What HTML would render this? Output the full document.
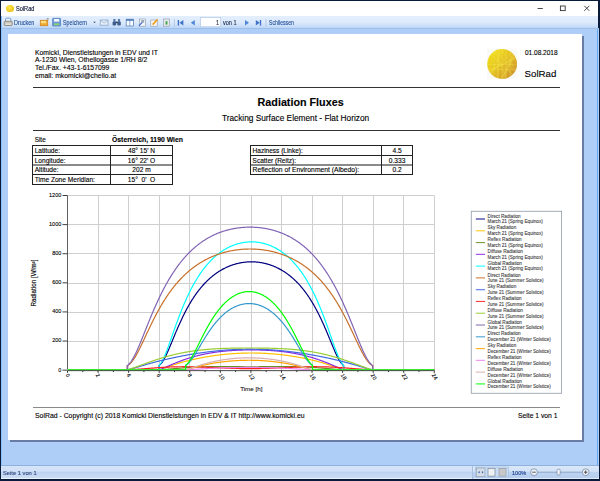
<!DOCTYPE html>
<html><head><meta charset="utf-8">
<style>
html,body{margin:0;padding:0;width:600px;height:481px;overflow:hidden;background:#fff;}
body{position:relative;font-family:"Liberation Sans",sans-serif;}
.a{position:absolute;}
.t{position:absolute;white-space:nowrap;-webkit-text-stroke:0.12px currentColor;}
</style></head><body>
<!-- window frame -->
<div class="a" style="left:0;top:0;width:600px;height:481px;background:#0a1a3a"></div>
<div class="a" style="left:1px;top:1px;width:596.6px;height:15px;background:#fff"></div>
<!-- toolbar -->
<div class="a" style="left:1px;top:16px;width:596.6px;height:11.5px;background:linear-gradient(#e4effd,#dceafc 55%,#c8def9 85%,#bcd6f6)"></div>
<div class="a" style="left:1px;top:27.5px;width:597.5px;height:1.5px;background:#9ebfea"></div>
<!-- main area -->
<div class="a" style="left:1px;top:29px;width:597.5px;height:436px;background:#aecdf7"></div>
<div class="a" style="left:1px;top:16px;width:1px;height:463px;background:#8cc0ff"></div>
<div class="a" style="left:597.3px;top:29px;width:1.2px;height:450px;background:#6aa8f0"></div>
<!-- status bar -->
<div class="a" style="left:1px;top:465px;width:597.5px;height:1px;background:#8eb1de"></div>
<div class="a" style="left:1px;top:466px;width:597.5px;height:12.5px;background:linear-gradient(#d6e5f8,#d0e0f7 40%,#b8d1f0 52%,#c4d8f3 62%,#c8dbf4 88%,#eef5ff 97%)"></div>
<!-- page shadow + page -->
<div class="a" style="left:10px;top:36px;width:574px;height:405.6px;background:#687ca4;filter:blur(0.3px)"></div>
<div class="a" style="left:8px;top:34px;width:574.1px;height:406px;background:#fff"></div>

<!-- PAGE CONTENT -->
<div class="t" style="left:35px;top:49.70px;font-size:6.85px;line-height:6.85px;color:#000">Komicki, Dienstleistungen in EDV und IT</div>
<div class="t" style="left:35px;top:57.40px;font-size:6.85px;line-height:6.85px;color:#000">A-1230 Wien, Othellogasse 1/RH 8/2</div>
<div class="t" style="left:35px;top:65.10px;font-size:6.85px;line-height:6.85px;color:#000">Tel./Fax. +43-1-6157099</div>
<div class="t" style="left:35px;top:73.10px;font-size:6.85px;line-height:6.85px;color:#000">email: mkomicki@chello.at</div>

<div class="a" style="left:33px;top:86.7px;width:527px;height:1px;background:#333"></div>
<div class="t" style="left:525px;top:50.0px;font-size:6.53px;line-height:6.53px;color:#000">01.08.2018</div>
<div class="t" style="left:524.6px;top:68.8px;font-size:9.7px;line-height:9.7px;color:#000">SolRad</div>
<svg width="600" height="100" style="position:absolute;left:0;top:0">
<defs><linearGradient id="sg" x1="0" y1="0" x2="1" y2="1"><stop offset="0" stop-color="#f4e618"/><stop offset="0.4" stop-color="#e8c824"/><stop offset="1" stop-color="#c8862e"/></linearGradient>
<clipPath id="sc"><circle cx="502.15" cy="64.00" r="14.90"/></clipPath></defs>
<rect x="487" y="48.6" width="30.4" height="30.4" fill="#f9f9f7"/>
<circle cx="502.15" cy="64.00" r="14.90" fill="url(#sg)"/>
<g clip-path="url(#sc)" stroke="#f6ea50" stroke-width="0.45" opacity="0.75"><line x1="487.0" y1="50.9" x2="516.3" y2="78.1"/><line x1="492.7" y1="46.3" x2="508.6" y2="83.0"/><line x1="516.3" y1="48.2" x2="500.9" y2="85.1"/><line x1="481.9" y1="68.6" x2="521.9" y2="70.2"/><line x1="491.5" y1="46.5" x2="519.0" y2="75.6"/><line x1="522.2" y1="64.2" x2="482.2" y2="64.7"/><line x1="519.8" y1="54.5" x2="484.9" y2="74.2"/><line x1="515.7" y1="48.2" x2="498.8" y2="84.5"/><line x1="505.0" y1="43.3" x2="488.6" y2="79.8"/><line x1="499.8" y1="43.8" x2="496.8" y2="83.7"/><line x1="518.4" y1="50.4" x2="497.9" y2="84.7"/><line x1="515.6" y1="49.2" x2="486.6" y2="76.7"/><line x1="496.5" y1="43.4" x2="519.9" y2="75.8"/><line x1="520.6" y1="56.2" x2="484.1" y2="72.6"/><line x1="494.1" y1="48.0" x2="494.1" y2="80.0"/><line x1="498.1" y1="48.0" x2="498.1" y2="80.0"/><line x1="502.1" y1="48.0" x2="502.1" y2="80.0"/><line x1="506.1" y1="48.0" x2="506.1" y2="80.0"/><line x1="510.1" y1="48.0" x2="510.1" y2="80.0"/></g>
</svg>

<div class="t" style="left:257.6px;top:96.5px;font-size:10.75px;line-height:10.75px;font-weight:bold;color:#000">Radiation Fluxes</div>
<div class="t" style="left:221.9px;top:113.5px;font-size:8.3px;line-height:8.3px;color:#000">Tracking Surface Element - Flat Horizon</div>
<div class="a" style="left:33px;top:130px;width:527px;height:1px;background:#333"></div>

<!-- site table -->
<div class="t" style="left:34.7px;top:137.3px;font-size:6.4px;line-height:6.4px;color:#000">Site</div>
<div class="t" style="left:112px;top:137.3px;font-size:6.84px;line-height:6.84px;font-weight:bold;color:#000">Österreich, 1190 Wien</div>
<div class="a" style="left:32.30px;top:145.00px;width:140.70px;height:1.00px;background:#222"></div>
<div class="a" style="left:32.30px;top:154.85px;width:140.70px;height:1.00px;background:#222"></div>
<div class="a" style="left:32.30px;top:164.20px;width:140.70px;height:1.60px;background:#8a8a8a"></div>
<div class="a" style="left:32.30px;top:174.20px;width:140.70px;height:1.00px;background:#222"></div>
<div class="a" style="left:32.30px;top:183.65px;width:140.70px;height:1.00px;background:#222"></div>
<div class="a" style="left:31.80px;top:145.00px;width:1.00px;height:39.65px;background:#222"></div>
<div class="a" style="left:110.00px;top:145.00px;width:1.00px;height:39.65px;background:#222"></div>
<div class="a" style="left:172.00px;top:145.00px;width:1.00px;height:39.65px;background:#222"></div>
<div class="t" style="top:147.81px;font-size:6.60px;line-height:6.60px;color:#000;left:34.70px;">Latitude:</div>
<div class="t" style="top:147.81px;font-size:6.60px;line-height:6.60px;color:#000;left:141.50px;width:0;display:flex;justify-content:center;">48° 15' N</div>
<div class="t" style="top:157.66px;font-size:6.60px;line-height:6.60px;color:#000;left:34.70px;">Longitude:</div>
<div class="t" style="top:157.66px;font-size:6.60px;line-height:6.60px;color:#000;left:141.50px;width:0;display:flex;justify-content:center;">16° 22' O</div>
<div class="t" style="top:167.31px;font-size:6.60px;line-height:6.60px;color:#000;left:34.70px;">Altitude:</div>
<div class="t" style="top:167.31px;font-size:6.60px;line-height:6.60px;color:#000;left:141.50px;width:0;display:flex;justify-content:center;">202 m</div>
<div class="t" style="top:177.01px;font-size:6.60px;line-height:6.60px;color:#000;left:34.70px;">Time Zone Meridian:</div>
<div class="t" style="top:177.01px;font-size:6.60px;line-height:6.60px;color:#000;left:141.50px;width:0;display:flex;justify-content:center;">15°&nbsp;&nbsp;0'&nbsp;&nbsp;O</div>
<div class="a" style="left:250.40px;top:145.10px;width:162.70px;height:1.00px;background:#222"></div>
<div class="a" style="left:250.40px;top:154.90px;width:162.70px;height:1.00px;background:#222"></div>
<div class="a" style="left:250.40px;top:164.20px;width:162.70px;height:1.60px;background:#8a8a8a"></div>
<div class="a" style="left:250.40px;top:174.00px;width:162.70px;height:1.00px;background:#222"></div>
<div class="a" style="left:249.90px;top:145.10px;width:1.00px;height:29.90px;background:#222"></div>
<div class="a" style="left:381.10px;top:145.10px;width:1.00px;height:29.90px;background:#222"></div>
<div class="a" style="left:412.10px;top:145.10px;width:1.00px;height:29.90px;background:#222"></div>
<div class="t" style="top:148.00px;font-size:6.50px;line-height:6.50px;color:#000;left:252.60px;">Haziness (Linke):</div>
<div class="t" style="top:147.91px;font-size:6.60px;line-height:6.60px;color:#000;left:397.10px;width:0;display:flex;justify-content:center;">4.5</div>
<div class="t" style="top:157.80px;font-size:6.50px;line-height:6.50px;color:#000;left:252.60px;">Scatter (Reitz):</div>
<div class="t" style="top:157.71px;font-size:6.60px;line-height:6.60px;color:#000;left:397.10px;width:0;display:flex;justify-content:center;">0.333</div>
<div class="t" style="top:167.19px;font-size:6.75px;line-height:6.75px;color:#000;left:252.60px;">Reflection of Environment (Albedo):</div>
<div class="t" style="top:167.31px;font-size:6.60px;line-height:6.60px;color:#000;left:397.10px;width:0;display:flex;justify-content:center;">0.2</div>

<svg style="position:absolute;left:0;top:0" width="600" height="481"><line x1="67.50" y1="195.5" x2="67.50" y2="370.15" stroke="#cfcfcf" stroke-width="1"/><line x1="98.50" y1="195.5" x2="98.50" y2="370.15" stroke="#cfcfcf" stroke-width="1"/><line x1="128.50" y1="195.5" x2="128.50" y2="370.15" stroke="#cfcfcf" stroke-width="1"/><line x1="159.50" y1="195.5" x2="159.50" y2="370.15" stroke="#cfcfcf" stroke-width="1"/><line x1="189.50" y1="195.5" x2="189.50" y2="370.15" stroke="#cfcfcf" stroke-width="1"/><line x1="220.50" y1="195.5" x2="220.50" y2="370.15" stroke="#cfcfcf" stroke-width="1"/><line x1="251.50" y1="195.5" x2="251.50" y2="370.15" stroke="#cfcfcf" stroke-width="1"/><line x1="281.50" y1="195.5" x2="281.50" y2="370.15" stroke="#cfcfcf" stroke-width="1"/><line x1="312.50" y1="195.5" x2="312.50" y2="370.15" stroke="#cfcfcf" stroke-width="1"/><line x1="342.50" y1="195.5" x2="342.50" y2="370.15" stroke="#cfcfcf" stroke-width="1"/><line x1="373.50" y1="195.5" x2="373.50" y2="370.15" stroke="#cfcfcf" stroke-width="1"/><line x1="403.50" y1="195.5" x2="403.50" y2="370.15" stroke="#cfcfcf" stroke-width="1"/><line x1="434.50" y1="195.5" x2="434.50" y2="370.15" stroke="#cfcfcf" stroke-width="1"/><line x1="67.5" y1="370.50" x2="434.3" y2="370.50" stroke="#cfcfcf" stroke-width="1"/><line x1="67.5" y1="341.50" x2="434.3" y2="341.50" stroke="#cfcfcf" stroke-width="1"/><line x1="67.5" y1="312.50" x2="434.3" y2="312.50" stroke="#cfcfcf" stroke-width="1"/><line x1="67.5" y1="283.50" x2="434.3" y2="283.50" stroke="#cfcfcf" stroke-width="1"/><line x1="67.5" y1="253.50" x2="434.3" y2="253.50" stroke="#cfcfcf" stroke-width="1"/><line x1="67.5" y1="224.50" x2="434.3" y2="224.50" stroke="#cfcfcf" stroke-width="1"/><line x1="67.5" y1="195.50" x2="434.3" y2="195.50" stroke="#cfcfcf" stroke-width="1"/><line x1="67.5" y1="195.5" x2="67.5" y2="371" stroke="#606060" stroke-width="1"/><line x1="62.5" y1="370.15" x2="67.5" y2="370.15" stroke="#404040" stroke-width="1"/><line x1="62.5" y1="341.04" x2="67.5" y2="341.04" stroke="#404040" stroke-width="1"/><line x1="62.5" y1="311.93" x2="67.5" y2="311.93" stroke="#404040" stroke-width="1"/><line x1="62.5" y1="282.83" x2="67.5" y2="282.83" stroke="#404040" stroke-width="1"/><line x1="62.5" y1="253.72" x2="67.5" y2="253.72" stroke="#404040" stroke-width="1"/><line x1="62.5" y1="224.61" x2="67.5" y2="224.61" stroke="#404040" stroke-width="1"/><line x1="62.5" y1="195.50" x2="67.5" y2="195.50" stroke="#404040" stroke-width="1"/><line x1="67.50" y1="370.3" x2="67.50" y2="372.80" stroke="#303030" stroke-width="1"/><line x1="82.78" y1="370.3" x2="82.78" y2="372.10" stroke="#303030" stroke-width="1"/><line x1="98.07" y1="370.3" x2="98.07" y2="372.80" stroke="#303030" stroke-width="1"/><line x1="113.35" y1="370.3" x2="113.35" y2="372.10" stroke="#303030" stroke-width="1"/><line x1="128.63" y1="370.3" x2="128.63" y2="372.80" stroke="#303030" stroke-width="1"/><line x1="143.91" y1="370.3" x2="143.91" y2="372.10" stroke="#303030" stroke-width="1"/><line x1="159.20" y1="370.3" x2="159.20" y2="372.80" stroke="#303030" stroke-width="1"/><line x1="174.48" y1="370.3" x2="174.48" y2="372.10" stroke="#303030" stroke-width="1"/><line x1="189.76" y1="370.3" x2="189.76" y2="372.80" stroke="#303030" stroke-width="1"/><line x1="205.05" y1="370.3" x2="205.05" y2="372.10" stroke="#303030" stroke-width="1"/><line x1="220.33" y1="370.3" x2="220.33" y2="372.80" stroke="#303030" stroke-width="1"/><line x1="235.61" y1="370.3" x2="235.61" y2="372.10" stroke="#303030" stroke-width="1"/><line x1="250.90" y1="370.3" x2="250.90" y2="372.80" stroke="#303030" stroke-width="1"/><line x1="266.18" y1="370.3" x2="266.18" y2="372.10" stroke="#303030" stroke-width="1"/><line x1="281.46" y1="370.3" x2="281.46" y2="372.80" stroke="#303030" stroke-width="1"/><line x1="296.75" y1="370.3" x2="296.75" y2="372.10" stroke="#303030" stroke-width="1"/><line x1="312.03" y1="370.3" x2="312.03" y2="372.80" stroke="#303030" stroke-width="1"/><line x1="327.31" y1="370.3" x2="327.31" y2="372.10" stroke="#303030" stroke-width="1"/><line x1="342.59" y1="370.3" x2="342.59" y2="372.80" stroke="#303030" stroke-width="1"/><line x1="357.88" y1="370.3" x2="357.88" y2="372.10" stroke="#303030" stroke-width="1"/><line x1="373.16" y1="370.3" x2="373.16" y2="372.80" stroke="#303030" stroke-width="1"/><line x1="388.44" y1="370.3" x2="388.44" y2="372.10" stroke="#303030" stroke-width="1"/><line x1="403.73" y1="370.3" x2="403.73" y2="372.80" stroke="#303030" stroke-width="1"/><line x1="419.01" y1="370.3" x2="419.01" y2="372.10" stroke="#303030" stroke-width="1"/><line x1="434.29" y1="370.3" x2="434.29" y2="372.80" stroke="#303030" stroke-width="1"/><path d="M67.50 369.85 L158.89 369.85 L159.05 369.85 L159.05 365.44 L159.20 365.34 L159.66 365.01 L160.11 364.62 L160.57 364.18 L161.03 363.69 L161.49 363.15 L161.95 362.56 L162.41 361.92 L162.87 361.24 L163.32 360.51 L163.78 359.73 L164.24 358.92 L164.70 358.07 L165.16 357.19 L165.62 356.28 L166.08 355.33 L166.53 354.36 L166.99 353.37 L167.45 352.35 L167.91 351.32 L168.37 350.27 L168.83 349.20 L169.28 348.13 L169.74 347.04 L170.20 345.94 L170.66 344.84 L171.12 343.73 L171.58 342.62 L172.04 341.50 L172.49 340.39 L172.95 339.27 L173.41 338.16 L173.87 337.05 L174.33 335.94 L174.79 334.83 L175.25 333.73 L175.70 332.64 L176.16 331.55 L176.62 330.47 L177.08 329.40 L177.54 328.33 L178.00 327.28 L178.45 326.23 L178.91 325.19 L179.37 324.16 L179.83 323.14 L180.29 322.13 L180.75 321.14 L181.21 320.15 L181.66 319.17 L182.12 318.20 L182.58 317.25 L183.04 316.30 L183.50 315.37 L183.96 314.44 L184.41 313.53 L184.87 312.63 L185.33 311.74 L185.79 310.86 L186.25 309.99 L186.71 309.13 L187.17 308.29 L187.62 307.45 L188.08 306.63 L188.54 305.81 L189.00 305.01 L189.46 304.22 L189.92 303.44 L190.38 302.67 L190.83 301.91 L191.29 301.16 L191.75 300.42 L192.21 299.69 L192.67 298.97 L193.13 298.26 L193.58 297.56 L194.04 296.87 L194.50 296.19 L194.96 295.52 L195.42 294.86 L195.88 294.21 L196.34 293.57 L196.79 292.94 L197.25 292.31 L197.71 291.70 L198.17 291.09 L198.63 290.50 L199.09 289.91 L199.55 289.33 L200.00 288.76 L200.46 288.20 L200.92 287.64 L201.38 287.10 L201.84 286.56 L202.30 286.03 L202.75 285.51 L203.21 284.99 L203.67 284.49 L204.13 283.99 L204.59 283.50 L205.05 283.01 L205.51 282.53 L205.96 282.07 L206.42 281.60 L206.88 281.15 L207.34 280.70 L207.80 280.26 L208.26 279.83 L208.71 279.40 L209.17 278.98 L209.63 278.56 L210.09 278.16 L210.55 277.76 L211.01 277.36 L211.47 276.97 L211.92 276.59 L212.38 276.21 L212.84 275.84 L213.30 275.48 L213.76 275.12 L214.22 274.77 L214.68 274.43 L215.13 274.09 L215.59 273.75 L216.05 273.42 L216.51 273.10 L216.97 272.78 L217.43 272.47 L217.88 272.16 L218.34 271.86 L218.80 271.56 L219.26 271.27 L219.72 270.99 L220.18 270.71 L220.64 270.43 L221.09 270.16 L221.55 269.90 L222.01 269.64 L222.47 269.38 L222.93 269.13 L223.39 268.89 L223.85 268.64 L224.30 268.41 L224.76 268.18 L225.22 267.95 L225.68 267.73 L226.14 267.51 L226.60 267.30 L227.05 267.09 L227.51 266.89 L227.97 266.69 L228.43 266.49 L228.89 266.30 L229.35 266.11 L229.81 265.93 L230.26 265.75 L230.72 265.58 L231.18 265.41 L231.64 265.25 L232.10 265.08 L232.56 264.93 L233.01 264.78 L233.47 264.63 L233.93 264.48 L234.39 264.34 L234.85 264.21 L235.31 264.07 L235.77 263.94 L236.22 263.82 L236.68 263.70 L237.14 263.58 L237.60 263.47 L238.06 263.36 L238.52 263.26 L238.98 263.15 L239.43 263.06 L239.89 262.96 L240.35 262.87 L240.81 262.79 L241.27 262.70 L241.73 262.63 L242.18 262.55 L242.64 262.48 L243.10 262.41 L243.56 262.35 L244.02 262.29 L244.48 262.23 L244.94 262.18 L245.39 262.13 L245.85 262.08 L246.31 262.04 L246.77 262.00 L247.23 261.97 L247.69 261.94 L248.15 261.91 L248.60 261.89 L249.06 261.87 L249.52 261.85 L249.98 261.84 L250.44 261.83 L250.90 261.82 L251.35 261.82 L251.81 261.82 L252.27 261.83 L252.73 261.84 L253.19 261.85 L253.65 261.87 L254.11 261.89 L254.56 261.91 L255.02 261.94 L255.48 261.97 L255.94 262.00 L256.40 262.04 L256.86 262.08 L257.31 262.12 L257.77 262.17 L258.23 262.22 L258.69 262.28 L259.15 262.34 L259.61 262.40 L260.07 262.47 L260.52 262.54 L260.98 262.62 L261.44 262.69 L261.90 262.78 L262.36 262.86 L262.82 262.95 L263.28 263.04 L263.73 263.14 L264.19 263.24 L264.65 263.35 L265.11 263.45 L265.57 263.57 L266.03 263.68 L266.48 263.80 L266.94 263.93 L267.40 264.06 L267.86 264.19 L268.32 264.32 L268.78 264.46 L269.24 264.61 L269.69 264.76 L270.15 264.91 L270.61 265.06 L271.07 265.22 L271.53 265.39 L271.99 265.56 L272.45 265.73 L272.90 265.91 L273.36 266.09 L273.82 266.27 L274.28 266.47 L274.74 266.66 L275.20 266.86 L275.65 267.06 L276.11 267.27 L276.57 267.48 L277.03 267.70 L277.49 267.92 L277.95 268.15 L278.41 268.38 L278.86 268.61 L279.32 268.85 L279.78 269.10 L280.24 269.35 L280.70 269.60 L281.16 269.86 L281.61 270.13 L282.07 270.40 L282.53 270.67 L282.99 270.95 L283.45 271.24 L283.91 271.53 L284.37 271.82 L284.82 272.12 L285.28 272.43 L285.74 272.74 L286.20 273.06 L286.66 273.38 L287.12 273.71 L287.58 274.04 L288.03 274.38 L288.49 274.72 L288.95 275.08 L289.41 275.43 L289.87 275.80 L290.33 276.16 L290.78 276.54 L291.24 276.92 L291.70 277.31 L292.16 277.70 L292.62 278.10 L293.08 278.51 L293.54 278.92 L293.99 279.34 L294.45 279.77 L294.91 280.20 L295.37 280.64 L295.83 281.09 L296.29 281.54 L296.75 282.00 L297.20 282.47 L297.66 282.95 L298.12 283.43 L298.58 283.92 L299.04 284.42 L299.50 284.92 L299.95 285.44 L300.41 285.96 L300.87 286.49 L301.33 287.02 L301.79 287.57 L302.25 288.12 L302.71 288.68 L303.16 289.25 L303.62 289.83 L304.08 290.42 L304.54 291.01 L305.00 291.62 L305.46 292.23 L305.91 292.85 L306.37 293.48 L306.83 294.12 L307.29 294.77 L307.75 295.43 L308.21 296.10 L308.67 296.78 L309.12 297.47 L309.58 298.17 L310.04 298.87 L310.50 299.59 L310.96 300.32 L311.42 301.06 L311.88 301.81 L312.33 302.57 L312.79 303.34 L313.25 304.11 L313.71 304.91 L314.17 305.71 L314.63 306.52 L315.08 307.34 L315.54 308.18 L316.00 309.02 L316.46 309.88 L316.92 310.74 L317.38 311.62 L317.84 312.51 L318.29 313.41 L318.75 314.32 L319.21 315.24 L319.67 316.17 L320.13 317.12 L320.59 318.07 L321.04 319.04 L321.50 320.02 L321.96 321.00 L322.42 322.00 L322.88 323.01 L323.34 324.03 L323.80 325.05 L324.25 326.09 L324.71 327.14 L325.17 328.19 L325.63 329.26 L326.09 330.33 L326.55 331.41 L327.01 332.49 L327.46 333.59 L327.92 334.69 L328.38 335.79 L328.84 336.90 L329.30 338.01 L329.76 339.12 L330.21 340.24 L330.67 341.35 L331.13 342.47 L331.59 343.58 L332.05 344.69 L332.51 345.80 L332.97 346.89 L333.42 347.98 L333.88 349.06 L334.34 350.13 L334.80 351.18 L335.26 352.22 L335.72 353.23 L336.18 354.23 L336.63 355.20 L337.09 356.15 L337.55 357.07 L338.01 357.96 L338.47 358.81 L338.93 359.63 L339.38 360.40 L339.84 361.14 L340.30 361.83 L340.76 362.48 L341.22 363.08 L341.68 363.63 L342.14 364.12 L342.59 364.57 L343.05 364.96 L343.51 365.30 L343.66 365.40 L343.66 369.85 L343.82 369.85 L434.29 369.85" fill="none" stroke="#000080" stroke-width="1.2" stroke-linejoin="round"/><path d="M67.50 369.85 L158.89 369.85 L159.05 369.85 L159.05 369.83 L159.20 369.79 L159.66 369.67 L160.11 369.54 L160.57 369.40 L161.03 369.26 L161.49 369.11 L161.95 368.96 L162.41 368.80 L162.87 368.64 L163.32 368.48 L163.78 368.32 L164.24 368.16 L164.70 367.99 L165.16 367.83 L165.62 367.67 L166.08 367.50 L166.53 367.34 L166.99 367.17 L167.45 367.01 L167.91 366.85 L168.37 366.68 L168.83 366.52 L169.28 366.36 L169.74 366.20 L170.20 366.04 L170.66 365.88 L171.12 365.72 L171.58 365.57 L172.04 365.41 L172.49 365.26 L172.95 365.10 L173.41 364.95 L173.87 364.80 L174.33 364.65 L174.79 364.50 L175.25 364.36 L175.70 364.21 L176.16 364.06 L176.62 363.92 L177.08 363.78 L177.54 363.64 L178.00 363.50 L178.45 363.36 L178.91 363.22 L179.37 363.08 L179.83 362.95 L180.29 362.81 L180.75 362.68 L181.21 362.55 L181.66 362.42 L182.12 362.29 L182.58 362.16 L183.04 362.03 L183.50 361.91 L183.96 361.78 L184.41 361.66 L184.87 361.54 L185.33 361.41 L185.79 361.29 L186.25 361.17 L186.71 361.06 L187.17 360.94 L187.62 360.82 L188.08 360.71 L188.54 360.59 L189.00 360.48 L189.46 360.37 L189.92 360.25 L190.38 360.14 L190.83 360.03 L191.29 359.93 L191.75 359.82 L192.21 359.71 L192.67 359.61 L193.13 359.50 L193.58 359.40 L194.04 359.30 L194.50 359.19 L194.96 359.09 L195.42 358.99 L195.88 358.89 L196.34 358.80 L196.79 358.70 L197.25 358.60 L197.71 358.51 L198.17 358.41 L198.63 358.32 L199.09 358.23 L199.55 358.13 L200.00 358.04 L200.46 357.95 L200.92 357.86 L201.38 357.78 L201.84 357.69 L202.30 357.60 L202.75 357.52 L203.21 357.43 L203.67 357.35 L204.13 357.26 L204.59 357.18 L205.05 357.10 L205.51 357.02 L205.96 356.94 L206.42 356.86 L206.88 356.78 L207.34 356.70 L207.80 356.63 L208.26 356.55 L208.71 356.48 L209.17 356.40 L209.63 356.33 L210.09 356.26 L210.55 356.19 L211.01 356.11 L211.47 356.04 L211.92 355.97 L212.38 355.91 L212.84 355.84 L213.30 355.77 L213.76 355.71 L214.22 355.64 L214.68 355.58 L215.13 355.51 L215.59 355.45 L216.05 355.39 L216.51 355.33 L216.97 355.27 L217.43 355.21 L217.88 355.15 L218.34 355.09 L218.80 355.03 L219.26 354.98 L219.72 354.92 L220.18 354.87 L220.64 354.81 L221.09 354.76 L221.55 354.71 L222.01 354.65 L222.47 354.60 L222.93 354.55 L223.39 354.50 L223.85 354.46 L224.30 354.41 L224.76 354.36 L225.22 354.32 L225.68 354.27 L226.14 354.23 L226.60 354.18 L227.05 354.14 L227.51 354.10 L227.97 354.06 L228.43 354.02 L228.89 353.98 L229.35 353.94 L229.81 353.90 L230.26 353.86 L230.72 353.82 L231.18 353.79 L231.64 353.75 L232.10 353.72 L232.56 353.69 L233.01 353.65 L233.47 353.62 L233.93 353.59 L234.39 353.56 L234.85 353.53 L235.31 353.50 L235.77 353.48 L236.22 353.45 L236.68 353.42 L237.14 353.40 L237.60 353.37 L238.06 353.35 L238.52 353.33 L238.98 353.30 L239.43 353.28 L239.89 353.26 L240.35 353.24 L240.81 353.22 L241.27 353.21 L241.73 353.19 L242.18 353.17 L242.64 353.16 L243.10 353.14 L243.56 353.13 L244.02 353.11 L244.48 353.10 L244.94 353.09 L245.39 353.08 L245.85 353.07 L246.31 353.06 L246.77 353.05 L247.23 353.04 L247.69 353.04 L248.15 353.03 L248.60 353.02 L249.06 353.02 L249.52 353.02 L249.98 353.01 L250.44 353.01 L250.90 353.01 L251.35 353.01 L251.81 353.01 L252.27 353.01 L252.73 353.01 L253.19 353.02 L253.65 353.02 L254.11 353.02 L254.56 353.03 L255.02 353.04 L255.48 353.04 L255.94 353.05 L256.40 353.06 L256.86 353.07 L257.31 353.08 L257.77 353.09 L258.23 353.10 L258.69 353.11 L259.15 353.13 L259.61 353.14 L260.07 353.15 L260.52 353.17 L260.98 353.19 L261.44 353.20 L261.90 353.22 L262.36 353.24 L262.82 353.26 L263.28 353.28 L263.73 353.30 L264.19 353.32 L264.65 353.35 L265.11 353.37 L265.57 353.39 L266.03 353.42 L266.48 353.45 L266.94 353.47 L267.40 353.50 L267.86 353.53 L268.32 353.56 L268.78 353.59 L269.24 353.62 L269.69 353.65 L270.15 353.68 L270.61 353.72 L271.07 353.75 L271.53 353.78 L271.99 353.82 L272.45 353.86 L272.90 353.89 L273.36 353.93 L273.82 353.97 L274.28 354.01 L274.74 354.05 L275.20 354.09 L275.65 354.13 L276.11 354.18 L276.57 354.22 L277.03 354.26 L277.49 354.31 L277.95 354.36 L278.41 354.40 L278.86 354.45 L279.32 354.50 L279.78 354.55 L280.24 354.60 L280.70 354.65 L281.16 354.70 L281.61 354.75 L282.07 354.80 L282.53 354.86 L282.99 354.91 L283.45 354.97 L283.91 355.03 L284.37 355.08 L284.82 355.14 L285.28 355.20 L285.74 355.26 L286.20 355.32 L286.66 355.38 L287.12 355.44 L287.58 355.50 L288.03 355.57 L288.49 355.63 L288.95 355.70 L289.41 355.76 L289.87 355.83 L290.33 355.90 L290.78 355.97 L291.24 356.03 L291.70 356.10 L292.16 356.18 L292.62 356.25 L293.08 356.32 L293.54 356.39 L293.99 356.47 L294.45 356.54 L294.91 356.62 L295.37 356.69 L295.83 356.77 L296.29 356.85 L296.75 356.93 L297.20 357.01 L297.66 357.09 L298.12 357.17 L298.58 357.25 L299.04 357.34 L299.50 357.42 L299.95 357.50 L300.41 357.59 L300.87 357.68 L301.33 357.76 L301.79 357.85 L302.25 357.94 L302.71 358.03 L303.16 358.12 L303.62 358.21 L304.08 358.31 L304.54 358.40 L305.00 358.49 L305.46 358.59 L305.91 358.69 L306.37 358.78 L306.83 358.88 L307.29 358.98 L307.75 359.08 L308.21 359.18 L308.67 359.28 L309.12 359.38 L309.58 359.49 L310.04 359.59 L310.50 359.70 L310.96 359.80 L311.42 359.91 L311.88 360.02 L312.33 360.13 L312.79 360.24 L313.25 360.35 L313.71 360.46 L314.17 360.58 L314.63 360.69 L315.08 360.81 L315.54 360.92 L316.00 361.04 L316.46 361.16 L316.92 361.28 L317.38 361.40 L317.84 361.52 L318.29 361.64 L318.75 361.77 L319.21 361.89 L319.67 362.02 L320.13 362.14 L320.59 362.27 L321.04 362.40 L321.50 362.53 L321.96 362.66 L322.42 362.80 L322.88 362.93 L323.34 363.07 L323.80 363.20 L324.25 363.34 L324.71 363.48 L325.17 363.62 L325.63 363.76 L326.09 363.90 L326.55 364.05 L327.01 364.19 L327.46 364.34 L327.92 364.48 L328.38 364.63 L328.84 364.78 L329.30 364.93 L329.76 365.08 L330.21 365.24 L330.67 365.39 L331.13 365.55 L331.59 365.70 L332.05 365.86 L332.51 366.02 L332.97 366.18 L333.42 366.34 L333.88 366.50 L334.34 366.66 L334.80 366.82 L335.26 366.99 L335.72 367.15 L336.18 367.32 L336.63 367.48 L337.09 367.64 L337.55 367.81 L338.01 367.97 L338.47 368.14 L338.93 368.30 L339.38 368.46 L339.84 368.62 L340.30 368.78 L340.76 368.93 L341.22 369.09 L341.68 369.24 L342.14 369.38 L342.59 369.52 L343.05 369.65 L343.51 369.78 L343.66 369.82 L343.66 369.85 L343.82 369.85 L434.29 369.85" fill="none" stroke="#ffc000" stroke-width="1.2" stroke-linejoin="round"/><path d="M67.50 369.85 L158.89 369.85 L159.05 369.85 L159.05 369.85 L159.20 369.84 L159.66 369.81 L160.11 369.78 L160.57 369.75 L161.03 369.72 L161.49 369.69 L161.95 369.66 L162.41 369.63 L162.87 369.60 L163.32 369.56 L163.78 369.53 L164.24 369.49 L164.70 369.46 L165.16 369.42 L165.62 369.38 L166.08 369.35 L166.53 369.31 L166.99 369.27 L167.45 369.23 L167.91 369.20 L168.37 369.16 L168.83 369.12 L169.28 369.08 L169.74 369.04 L170.20 369.00 L170.66 368.96 L171.12 368.92 L171.58 368.88 L172.04 368.84 L172.49 368.80 L172.95 368.76 L173.41 368.72 L173.87 368.68 L174.33 368.64 L174.79 368.60 L175.25 368.56 L175.70 368.52 L176.16 368.48 L176.62 368.44 L177.08 368.40 L177.54 368.36 L178.00 368.32 L178.45 368.28 L178.91 368.24 L179.37 368.20 L179.83 368.17 L180.29 368.13 L180.75 368.09 L181.21 368.05 L181.66 368.01 L182.12 367.98 L182.58 367.94 L183.04 367.90 L183.50 367.87 L183.96 367.83 L184.41 367.80 L184.87 367.76 L185.33 367.73 L185.79 367.70 L186.25 367.66 L186.71 367.63 L187.17 367.60 L187.62 367.57 L188.08 367.54 L188.54 367.50 L189.00 367.47 L189.46 367.44 L189.92 367.42 L190.38 367.39 L190.83 367.36 L191.29 367.33 L191.75 367.30 L192.21 367.28 L192.67 367.25 L193.13 367.23 L193.58 367.20 L194.04 367.18 L194.50 367.15 L194.96 367.13 L195.42 367.11 L195.88 367.08 L196.34 367.06 L196.79 367.04 L197.25 367.02 L197.71 367.00 L198.17 366.98 L198.63 366.96 L199.09 366.94 L199.55 366.93 L200.00 366.91 L200.46 366.89 L200.92 366.88 L201.38 366.86 L201.84 366.85 L202.30 366.83 L202.75 366.82 L203.21 366.80 L203.67 366.79 L204.13 366.78 L204.59 366.77 L205.05 366.75 L205.51 366.74 L205.96 366.73 L206.42 366.72 L206.88 366.71 L207.34 366.70 L207.80 366.69 L208.26 366.68 L208.71 366.68 L209.17 366.67 L209.63 366.66 L210.09 366.65 L210.55 366.65 L211.01 366.64 L211.47 366.64 L211.92 366.63 L212.38 366.63 L212.84 366.62 L213.30 366.62 L213.76 366.61 L214.22 366.61 L214.68 366.61 L215.13 366.60 L215.59 366.60 L216.05 366.60 L216.51 366.60 L216.97 366.60 L217.43 366.59 L217.88 366.59 L218.34 366.59 L218.80 366.59 L219.26 366.59 L219.72 366.59 L220.18 366.59 L220.64 366.59 L221.09 366.59 L221.55 366.59 L222.01 366.59 L222.47 366.60 L222.93 366.60 L223.39 366.60 L223.85 366.60 L224.30 366.60 L224.76 366.60 L225.22 366.61 L225.68 366.61 L226.14 366.61 L226.60 366.61 L227.05 366.62 L227.51 366.62 L227.97 366.62 L228.43 366.62 L228.89 366.63 L229.35 366.63 L229.81 366.63 L230.26 366.64 L230.72 366.64 L231.18 366.64 L231.64 366.65 L232.10 366.65 L232.56 366.65 L233.01 366.66 L233.47 366.66 L233.93 366.66 L234.39 366.67 L234.85 366.67 L235.31 366.67 L235.77 366.68 L236.22 366.68 L236.68 366.68 L237.14 366.69 L237.60 366.69 L238.06 366.69 L238.52 366.70 L238.98 366.70 L239.43 366.70 L239.89 366.70 L240.35 366.71 L240.81 366.71 L241.27 366.71 L241.73 366.71 L242.18 366.72 L242.64 366.72 L243.10 366.72 L243.56 366.72 L244.02 366.73 L244.48 366.73 L244.94 366.73 L245.39 366.73 L245.85 366.73 L246.31 366.73 L246.77 366.74 L247.23 366.74 L247.69 366.74 L248.15 366.74 L248.60 366.74 L249.06 366.74 L249.52 366.74 L249.98 366.74 L250.44 366.74 L250.90 366.74 L251.35 366.74 L251.81 366.74 L252.27 366.74 L252.73 366.74 L253.19 366.74 L253.65 366.74 L254.11 366.74 L254.56 366.74 L255.02 366.74 L255.48 366.74 L255.94 366.74 L256.40 366.73 L256.86 366.73 L257.31 366.73 L257.77 366.73 L258.23 366.73 L258.69 366.73 L259.15 366.72 L259.61 366.72 L260.07 366.72 L260.52 366.72 L260.98 366.71 L261.44 366.71 L261.90 366.71 L262.36 366.71 L262.82 366.70 L263.28 366.70 L263.73 366.70 L264.19 366.70 L264.65 366.69 L265.11 366.69 L265.57 366.69 L266.03 366.68 L266.48 366.68 L266.94 366.68 L267.40 366.67 L267.86 366.67 L268.32 366.67 L268.78 366.66 L269.24 366.66 L269.69 366.66 L270.15 366.65 L270.61 366.65 L271.07 366.65 L271.53 366.64 L271.99 366.64 L272.45 366.64 L272.90 366.63 L273.36 366.63 L273.82 366.63 L274.28 366.63 L274.74 366.62 L275.20 366.62 L275.65 366.62 L276.11 366.61 L276.57 366.61 L277.03 366.61 L277.49 366.61 L277.95 366.60 L278.41 366.60 L278.86 366.60 L279.32 366.60 L279.78 366.60 L280.24 366.60 L280.70 366.59 L281.16 366.59 L281.61 366.59 L282.07 366.59 L282.53 366.59 L282.99 366.59 L283.45 366.59 L283.91 366.59 L284.37 366.59 L284.82 366.59 L285.28 366.59 L285.74 366.60 L286.20 366.60 L286.66 366.60 L287.12 366.60 L287.58 366.60 L288.03 366.61 L288.49 366.61 L288.95 366.61 L289.41 366.62 L289.87 366.62 L290.33 366.63 L290.78 366.63 L291.24 366.64 L291.70 366.64 L292.16 366.65 L292.62 366.65 L293.08 366.66 L293.54 366.67 L293.99 366.68 L294.45 366.68 L294.91 366.69 L295.37 366.70 L295.83 366.71 L296.29 366.72 L296.75 366.73 L297.20 366.74 L297.66 366.75 L298.12 366.76 L298.58 366.78 L299.04 366.79 L299.50 366.80 L299.95 366.82 L300.41 366.83 L300.87 366.84 L301.33 366.86 L301.79 366.87 L302.25 366.89 L302.71 366.91 L303.16 366.92 L303.62 366.94 L304.08 366.96 L304.54 366.98 L305.00 367.00 L305.46 367.02 L305.91 367.04 L306.37 367.06 L306.83 367.08 L307.29 367.10 L307.75 367.13 L308.21 367.15 L308.67 367.17 L309.12 367.20 L309.58 367.22 L310.04 367.25 L310.50 367.27 L310.96 367.30 L311.42 367.33 L311.88 367.35 L312.33 367.38 L312.79 367.41 L313.25 367.44 L313.71 367.47 L314.17 367.50 L314.63 367.53 L315.08 367.56 L315.54 367.59 L316.00 367.63 L316.46 367.66 L316.92 367.69 L317.38 367.73 L317.84 367.76 L318.29 367.79 L318.75 367.83 L319.21 367.86 L319.67 367.90 L320.13 367.94 L320.59 367.97 L321.04 368.01 L321.50 368.05 L321.96 368.08 L322.42 368.12 L322.88 368.16 L323.34 368.20 L323.80 368.24 L324.25 368.28 L324.71 368.32 L325.17 368.35 L325.63 368.39 L326.09 368.43 L326.55 368.47 L327.01 368.51 L327.46 368.55 L327.92 368.59 L328.38 368.63 L328.84 368.68 L329.30 368.72 L329.76 368.76 L330.21 368.80 L330.67 368.84 L331.13 368.88 L331.59 368.92 L332.05 368.96 L332.51 369.00 L332.97 369.04 L333.42 369.07 L333.88 369.11 L334.34 369.15 L334.80 369.19 L335.26 369.23 L335.72 369.27 L336.18 369.30 L336.63 369.34 L337.09 369.38 L337.55 369.42 L338.01 369.45 L338.47 369.49 L338.93 369.52 L339.38 369.56 L339.84 369.59 L340.30 369.62 L340.76 369.66 L341.22 369.69 L341.68 369.72 L342.14 369.75 L342.59 369.78 L343.05 369.81 L343.51 369.83 L343.66 369.84 L343.66 369.85 L343.82 369.85 L434.29 369.85" fill="none" stroke="#6b8e23" stroke-width="1.2" stroke-linejoin="round"/><path d="M67.50 369.85 L158.89 369.85 L159.05 369.85 L159.05 369.83 L159.20 369.78 L159.66 369.63 L160.11 369.47 L160.57 369.30 L161.03 369.13 L161.49 368.95 L161.95 368.77 L162.41 368.58 L162.87 368.39 L163.32 368.19 L163.78 368.00 L164.24 367.80 L164.70 367.60 L165.16 367.40 L165.62 367.20 L166.08 367.00 L166.53 366.80 L166.99 366.60 L167.45 366.39 L167.91 366.19 L168.37 365.99 L168.83 365.79 L169.28 365.59 L169.74 365.39 L170.20 365.19 L170.66 364.99 L171.12 364.80 L171.58 364.60 L172.04 364.40 L172.49 364.21 L172.95 364.02 L173.41 363.82 L173.87 363.63 L174.33 363.44 L174.79 363.25 L175.25 363.07 L175.70 362.88 L176.16 362.69 L176.62 362.51 L177.08 362.33 L177.54 362.15 L178.00 361.97 L178.45 361.79 L178.91 361.61 L179.37 361.44 L179.83 361.26 L180.29 361.09 L180.75 360.92 L181.21 360.75 L181.66 360.58 L182.12 360.42 L182.58 360.25 L183.04 360.09 L183.50 359.93 L183.96 359.77 L184.41 359.61 L184.87 359.45 L185.33 359.29 L185.79 359.14 L186.25 358.99 L186.71 358.84 L187.17 358.69 L187.62 358.54 L188.08 358.39 L188.54 358.25 L189.00 358.10 L189.46 357.96 L189.92 357.82 L190.38 357.68 L190.83 357.54 L191.29 357.41 L191.75 357.27 L192.21 357.14 L192.67 357.01 L193.13 356.88 L193.58 356.75 L194.04 356.62 L194.50 356.50 L194.96 356.37 L195.42 356.25 L195.88 356.13 L196.34 356.01 L196.79 355.89 L197.25 355.77 L197.71 355.66 L198.17 355.54 L198.63 355.43 L199.09 355.32 L199.55 355.21 L200.00 355.10 L200.46 355.00 L200.92 354.89 L201.38 354.79 L201.84 354.68 L202.30 354.58 L202.75 354.48 L203.21 354.38 L203.67 354.29 L204.13 354.19 L204.59 354.10 L205.05 354.00 L205.51 353.91 L205.96 353.82 L206.42 353.73 L206.88 353.64 L207.34 353.56 L207.80 353.47 L208.26 353.39 L208.71 353.30 L209.17 353.22 L209.63 353.14 L210.09 353.06 L210.55 352.98 L211.01 352.91 L211.47 352.83 L211.92 352.76 L212.38 352.68 L212.84 352.61 L213.30 352.54 L213.76 352.47 L214.22 352.40 L214.68 352.33 L215.13 352.27 L215.59 352.20 L216.05 352.14 L216.51 352.07 L216.97 352.01 L217.43 351.95 L217.88 351.89 L218.34 351.83 L218.80 351.77 L219.26 351.72 L219.72 351.66 L220.18 351.61 L220.64 351.55 L221.09 351.50 L221.55 351.45 L222.01 351.40 L222.47 351.35 L222.93 351.30 L223.39 351.25 L223.85 351.21 L224.30 351.16 L224.76 351.12 L225.22 351.07 L225.68 351.03 L226.14 350.99 L226.60 350.95 L227.05 350.91 L227.51 350.87 L227.97 350.83 L228.43 350.79 L228.89 350.75 L229.35 350.72 L229.81 350.68 L230.26 350.65 L230.72 350.61 L231.18 350.58 L231.64 350.55 L232.10 350.52 L232.56 350.49 L233.01 350.46 L233.47 350.43 L233.93 350.40 L234.39 350.38 L234.85 350.35 L235.31 350.33 L235.77 350.30 L236.22 350.28 L236.68 350.26 L237.14 350.23 L237.60 350.21 L238.06 350.19 L238.52 350.17 L238.98 350.15 L239.43 350.13 L239.89 350.12 L240.35 350.10 L240.81 350.08 L241.27 350.07 L241.73 350.05 L242.18 350.04 L242.64 350.02 L243.10 350.01 L243.56 350.00 L244.02 349.99 L244.48 349.98 L244.94 349.97 L245.39 349.96 L245.85 349.95 L246.31 349.94 L246.77 349.94 L247.23 349.93 L247.69 349.92 L248.15 349.92 L248.60 349.91 L249.06 349.91 L249.52 349.91 L249.98 349.90 L250.44 349.90 L250.90 349.90 L251.35 349.90 L251.81 349.90 L252.27 349.90 L252.73 349.90 L253.19 349.91 L253.65 349.91 L254.11 349.91 L254.56 349.92 L255.02 349.92 L255.48 349.93 L255.94 349.93 L256.40 349.94 L256.86 349.95 L257.31 349.96 L257.77 349.97 L258.23 349.98 L258.69 349.99 L259.15 350.00 L259.61 350.01 L260.07 350.02 L260.52 350.04 L260.98 350.05 L261.44 350.07 L261.90 350.08 L262.36 350.10 L262.82 350.11 L263.28 350.13 L263.73 350.15 L264.19 350.17 L264.65 350.19 L265.11 350.21 L265.57 350.23 L266.03 350.25 L266.48 350.28 L266.94 350.30 L267.40 350.32 L267.86 350.35 L268.32 350.37 L268.78 350.40 L269.24 350.43 L269.69 350.46 L270.15 350.49 L270.61 350.52 L271.07 350.55 L271.53 350.58 L271.99 350.61 L272.45 350.64 L272.90 350.68 L273.36 350.71 L273.82 350.75 L274.28 350.78 L274.74 350.82 L275.20 350.86 L275.65 350.90 L276.11 350.94 L276.57 350.98 L277.03 351.02 L277.49 351.07 L277.95 351.11 L278.41 351.15 L278.86 351.20 L279.32 351.25 L279.78 351.29 L280.24 351.34 L280.70 351.39 L281.16 351.44 L281.61 351.49 L282.07 351.55 L282.53 351.60 L282.99 351.66 L283.45 351.71 L283.91 351.77 L284.37 351.82 L284.82 351.88 L285.28 351.94 L285.74 352.00 L286.20 352.07 L286.66 352.13 L287.12 352.19 L287.58 352.26 L288.03 352.32 L288.49 352.39 L288.95 352.46 L289.41 352.53 L289.87 352.60 L290.33 352.67 L290.78 352.75 L291.24 352.82 L291.70 352.90 L292.16 352.97 L292.62 353.05 L293.08 353.13 L293.54 353.21 L293.99 353.29 L294.45 353.38 L294.91 353.46 L295.37 353.54 L295.83 353.63 L296.29 353.72 L296.75 353.81 L297.20 353.90 L297.66 353.99 L298.12 354.08 L298.58 354.18 L299.04 354.27 L299.50 354.37 L299.95 354.47 L300.41 354.57 L300.87 354.67 L301.33 354.77 L301.79 354.88 L302.25 354.98 L302.71 355.09 L303.16 355.20 L303.62 355.31 L304.08 355.42 L304.54 355.53 L305.00 355.64 L305.46 355.76 L305.91 355.88 L306.37 355.99 L306.83 356.11 L307.29 356.23 L307.75 356.36 L308.21 356.48 L308.67 356.61 L309.12 356.73 L309.58 356.86 L310.04 356.99 L310.50 357.12 L310.96 357.25 L311.42 357.39 L311.88 357.52 L312.33 357.66 L312.79 357.80 L313.25 357.94 L313.71 358.08 L314.17 358.23 L314.63 358.37 L315.08 358.52 L315.54 358.67 L316.00 358.82 L316.46 358.97 L316.92 359.12 L317.38 359.27 L317.84 359.43 L318.29 359.59 L318.75 359.74 L319.21 359.90 L319.67 360.07 L320.13 360.23 L320.59 360.39 L321.04 360.56 L321.50 360.73 L321.96 360.90 L322.42 361.07 L322.88 361.24 L323.34 361.41 L323.80 361.59 L324.25 361.77 L324.71 361.94 L325.17 362.12 L325.63 362.30 L326.09 362.49 L326.55 362.67 L327.01 362.85 L327.46 363.04 L327.92 363.23 L328.38 363.42 L328.84 363.61 L329.30 363.80 L329.76 363.99 L330.21 364.18 L330.67 364.38 L331.13 364.57 L331.59 364.77 L332.05 364.97 L332.51 365.16 L332.97 365.36 L333.42 365.56 L333.88 365.76 L334.34 365.96 L334.80 366.17 L335.26 366.37 L335.72 366.57 L336.18 366.77 L336.63 366.97 L337.09 367.17 L337.55 367.37 L338.01 367.57 L338.47 367.77 L338.93 367.97 L339.38 368.17 L339.84 368.36 L340.30 368.55 L340.76 368.74 L341.22 368.93 L341.68 369.11 L342.14 369.28 L342.59 369.45 L343.05 369.61 L343.51 369.76 L343.66 369.81 L343.66 369.85 L343.82 369.85 L434.29 369.85" fill="none" stroke="#8a2be2" stroke-width="1.2" stroke-linejoin="round"/><path d="M67.50 369.85 L158.89 369.85 L159.05 369.85 L159.05 365.42 L159.20 365.27 L159.66 364.79 L160.11 364.24 L160.57 363.64 L161.03 362.98 L161.49 362.25 L161.95 361.48 L162.41 360.65 L162.87 359.77 L163.32 358.85 L163.78 357.88 L164.24 356.87 L164.70 355.82 L165.16 354.74 L165.62 353.63 L166.08 352.48 L166.53 351.31 L166.99 350.11 L167.45 348.90 L167.91 347.66 L168.37 346.41 L168.83 345.14 L169.28 343.87 L169.74 342.58 L170.20 341.28 L170.66 339.98 L171.12 338.68 L171.58 337.37 L172.04 336.06 L172.49 334.75 L172.95 333.44 L173.41 332.13 L173.87 330.83 L174.33 329.53 L174.79 328.24 L175.25 326.95 L175.70 325.67 L176.16 324.40 L176.62 323.13 L177.08 321.88 L177.54 320.63 L178.00 319.40 L178.45 318.17 L178.91 316.95 L179.37 315.75 L179.83 314.56 L180.29 313.38 L180.75 312.21 L181.21 311.05 L181.66 309.90 L182.12 308.77 L182.58 307.65 L183.04 306.54 L183.50 305.44 L183.96 304.36 L184.41 303.29 L184.87 302.23 L185.33 301.18 L185.79 300.15 L186.25 299.13 L186.71 298.12 L187.17 297.12 L187.62 296.14 L188.08 295.17 L188.54 294.21 L189.00 293.26 L189.46 292.33 L189.92 291.41 L190.38 290.50 L190.83 289.60 L191.29 288.71 L191.75 287.84 L192.21 286.98 L192.67 286.13 L193.13 285.29 L193.58 284.46 L194.04 283.64 L194.50 282.84 L194.96 282.05 L195.42 281.26 L195.88 280.49 L196.34 279.73 L196.79 278.98 L197.25 278.24 L197.71 277.51 L198.17 276.79 L198.63 276.08 L199.09 275.38 L199.55 274.69 L200.00 274.01 L200.46 273.34 L200.92 272.68 L201.38 272.03 L201.84 271.39 L202.30 270.76 L202.75 270.14 L203.21 269.53 L203.67 268.92 L204.13 268.33 L204.59 267.74 L205.05 267.16 L205.51 266.60 L205.96 266.04 L206.42 265.48 L206.88 264.94 L207.34 264.41 L207.80 263.88 L208.26 263.36 L208.71 262.85 L209.17 262.35 L209.63 261.85 L210.09 261.37 L210.55 260.89 L211.01 260.42 L211.47 259.95 L211.92 259.50 L212.38 259.05 L212.84 258.61 L213.30 258.17 L213.76 257.74 L214.22 257.32 L214.68 256.91 L215.13 256.50 L215.59 256.10 L216.05 255.71 L216.51 255.32 L216.97 254.94 L217.43 254.57 L217.88 254.20 L218.34 253.84 L218.80 253.49 L219.26 253.14 L219.72 252.80 L220.18 252.47 L220.64 252.14 L221.09 251.81 L221.55 251.50 L222.01 251.19 L222.47 250.88 L222.93 250.58 L223.39 250.29 L223.85 250.00 L224.30 249.72 L224.76 249.44 L225.22 249.17 L225.68 248.91 L226.14 248.65 L226.60 248.39 L227.05 248.14 L227.51 247.90 L227.97 247.66 L228.43 247.43 L228.89 247.20 L229.35 246.98 L229.81 246.76 L230.26 246.55 L230.72 246.35 L231.18 246.14 L231.64 245.95 L232.10 245.75 L232.56 245.57 L233.01 245.39 L233.47 245.21 L233.93 245.04 L234.39 244.87 L234.85 244.71 L235.31 244.55 L235.77 244.40 L236.22 244.25 L236.68 244.10 L237.14 243.97 L237.60 243.83 L238.06 243.70 L238.52 243.58 L238.98 243.46 L239.43 243.34 L239.89 243.23 L240.35 243.12 L240.81 243.02 L241.27 242.92 L241.73 242.83 L242.18 242.74 L242.64 242.65 L243.10 242.57 L243.56 242.50 L244.02 242.43 L244.48 242.36 L244.94 242.30 L245.39 242.24 L245.85 242.19 L246.31 242.14 L246.77 242.09 L247.23 242.05 L247.69 242.01 L248.15 241.98 L248.60 241.95 L249.06 241.93 L249.52 241.91 L249.98 241.89 L250.44 241.88 L250.90 241.88 L251.35 241.87 L251.81 241.88 L252.27 241.88 L252.73 241.89 L253.19 241.91 L253.65 241.93 L254.11 241.95 L254.56 241.98 L255.02 242.01 L255.48 242.04 L255.94 242.08 L256.40 242.13 L256.86 242.18 L257.31 242.23 L257.77 242.29 L258.23 242.35 L258.69 242.42 L259.15 242.49 L259.61 242.56 L260.07 242.64 L260.52 242.73 L260.98 242.82 L261.44 242.91 L261.90 243.01 L262.36 243.11 L262.82 243.21 L263.28 243.33 L263.73 243.44 L264.19 243.56 L264.65 243.68 L265.11 243.81 L265.57 243.95 L266.03 244.09 L266.48 244.23 L266.94 244.38 L267.40 244.53 L267.86 244.69 L268.32 244.85 L268.78 245.01 L269.24 245.19 L269.69 245.36 L270.15 245.54 L270.61 245.73 L271.07 245.92 L271.53 246.12 L271.99 246.32 L272.45 246.52 L272.90 246.74 L273.36 246.95 L273.82 247.17 L274.28 247.40 L274.74 247.63 L275.20 247.87 L275.65 248.11 L276.11 248.36 L276.57 248.61 L277.03 248.87 L277.49 249.14 L277.95 249.41 L278.41 249.68 L278.86 249.96 L279.32 250.25 L279.78 250.54 L280.24 250.84 L280.70 251.14 L281.16 251.46 L281.61 251.77 L282.07 252.09 L282.53 252.42 L282.99 252.76 L283.45 253.10 L283.91 253.44 L284.37 253.80 L284.82 254.16 L285.28 254.52 L285.74 254.89 L286.20 255.27 L286.66 255.66 L287.12 256.05 L287.58 256.45 L288.03 256.85 L288.49 257.27 L288.95 257.69 L289.41 258.11 L289.87 258.55 L290.33 258.99 L290.78 259.44 L291.24 259.89 L291.70 260.35 L292.16 260.83 L292.62 261.30 L293.08 261.79 L293.54 262.28 L293.99 262.78 L294.45 263.29 L294.91 263.81 L295.37 264.34 L295.83 264.87 L296.29 265.41 L296.75 265.96 L297.20 266.52 L297.66 267.09 L298.12 267.66 L298.58 268.25 L299.04 268.84 L299.50 269.44 L299.95 270.06 L300.41 270.68 L300.87 271.31 L301.33 271.95 L301.79 272.60 L302.25 273.25 L302.71 273.92 L303.16 274.60 L303.62 275.29 L304.08 275.99 L304.54 276.69 L305.00 277.41 L305.46 278.14 L305.91 278.88 L306.37 279.63 L306.83 280.39 L307.29 281.16 L307.75 281.94 L308.21 282.73 L308.67 283.54 L309.12 284.35 L309.58 285.18 L310.04 286.02 L310.50 286.86 L310.96 287.73 L311.42 288.60 L311.88 289.48 L312.33 290.38 L312.79 291.29 L313.25 292.21 L313.71 293.14 L314.17 294.08 L314.63 295.04 L315.08 296.01 L315.54 296.99 L316.00 297.99 L316.46 298.99 L316.92 300.01 L317.38 301.04 L317.84 302.09 L318.29 303.14 L318.75 304.21 L319.21 305.30 L319.67 306.39 L320.13 307.50 L320.59 308.62 L321.04 309.75 L321.50 310.89 L321.96 312.05 L322.42 313.22 L322.88 314.40 L323.34 315.59 L323.80 316.79 L324.25 318.01 L324.71 319.23 L325.17 320.47 L325.63 321.71 L326.09 322.96 L326.55 324.23 L327.01 325.50 L327.46 326.78 L327.92 328.06 L328.38 329.36 L328.84 330.65 L329.30 331.96 L329.76 333.26 L330.21 334.57 L330.67 335.88 L331.13 337.19 L331.59 338.50 L332.05 339.81 L332.51 341.11 L332.97 342.41 L333.42 343.70 L333.88 344.98 L334.34 346.24 L334.80 347.50 L335.26 348.73 L335.72 349.95 L336.18 351.15 L336.63 352.33 L337.09 353.47 L337.55 354.59 L338.01 355.68 L338.47 356.73 L338.93 357.75 L339.38 358.72 L339.84 359.65 L340.30 360.54 L340.76 361.37 L341.22 362.15 L341.68 362.88 L342.14 363.55 L342.59 364.17 L343.05 364.72 L343.51 365.21 L343.66 365.36 L343.66 369.85 L343.82 369.85 L434.29 369.85" fill="none" stroke="#00ffff" stroke-width="1.2" stroke-linejoin="round"/><path d="M67.50 369.85 L127.10 369.85 L127.26 369.85 L127.26 365.61 L127.41 365.53 L127.87 365.28 L128.33 365.00 L128.78 364.68 L129.24 364.34 L129.70 363.95 L130.16 363.54 L130.62 363.08 L131.08 362.60 L131.54 362.08 L131.99 361.53 L132.45 360.95 L132.91 360.34 L133.37 359.70 L133.83 359.03 L134.29 358.33 L134.75 357.61 L135.20 356.86 L135.66 356.09 L136.12 355.30 L136.58 354.49 L137.04 353.66 L137.50 352.81 L137.95 351.94 L138.41 351.06 L138.87 350.16 L139.33 349.25 L139.79 348.33 L140.25 347.40 L140.71 346.46 L141.16 345.51 L141.62 344.55 L142.08 343.59 L142.54 342.62 L143.00 341.65 L143.46 340.68 L143.91 339.70 L144.37 338.72 L144.83 337.74 L145.29 336.76 L145.75 335.77 L146.21 334.79 L146.67 333.81 L147.12 332.83 L147.58 331.86 L148.04 330.89 L148.50 329.92 L148.96 328.95 L149.42 327.99 L149.88 327.03 L150.33 326.08 L150.79 325.14 L151.25 324.19 L151.71 323.26 L152.17 322.33 L152.63 321.40 L153.08 320.49 L153.54 319.58 L154.00 318.67 L154.46 317.78 L154.92 316.89 L155.38 316.00 L155.84 315.13 L156.29 314.26 L156.75 313.40 L157.21 312.55 L157.67 311.70 L158.13 310.86 L158.59 310.03 L159.05 309.21 L159.50 308.40 L159.96 307.59 L160.42 306.79 L160.88 306.00 L161.34 305.22 L161.80 304.44 L162.25 303.68 L162.71 302.92 L163.17 302.16 L163.63 301.42 L164.09 300.69 L164.55 299.96 L165.01 299.24 L165.46 298.52 L165.92 297.82 L166.38 297.12 L166.84 296.43 L167.30 295.75 L167.76 295.07 L168.21 294.41 L168.67 293.75 L169.13 293.09 L169.59 292.45 L170.05 291.81 L170.51 291.18 L170.97 290.56 L171.42 289.94 L171.88 289.33 L172.34 288.73 L172.80 288.13 L173.26 287.54 L173.72 286.96 L174.18 286.38 L174.63 285.81 L175.09 285.25 L175.55 284.70 L176.01 284.15 L176.47 283.60 L176.93 283.07 L177.38 282.54 L177.84 282.01 L178.30 281.50 L178.76 280.98 L179.22 280.48 L179.68 279.98 L180.14 279.48 L180.59 279.00 L181.05 278.51 L181.51 278.04 L181.97 277.57 L182.43 277.10 L182.89 276.64 L183.35 276.19 L183.80 275.74 L184.26 275.30 L184.72 274.86 L185.18 274.43 L185.64 274.00 L186.10 273.58 L186.55 273.16 L187.01 272.75 L187.47 272.34 L187.93 271.94 L188.39 271.54 L188.85 271.15 L189.31 270.76 L189.76 270.38 L190.22 270.00 L190.68 269.63 L191.14 269.26 L191.60 268.90 L192.06 268.54 L192.51 268.18 L192.97 267.83 L193.43 267.49 L193.89 267.14 L194.35 266.81 L194.81 266.47 L195.27 266.14 L195.72 265.82 L196.18 265.50 L196.64 265.18 L197.10 264.87 L197.56 264.56 L198.02 264.26 L198.48 263.96 L198.93 263.66 L199.39 263.37 L199.85 263.08 L200.31 262.79 L200.77 262.51 L201.23 262.23 L201.68 261.96 L202.14 261.69 L202.60 261.42 L203.06 261.16 L203.52 260.90 L203.98 260.64 L204.44 260.39 L204.89 260.14 L205.35 259.90 L205.81 259.65 L206.27 259.42 L206.73 259.18 L207.19 258.95 L207.65 258.72 L208.10 258.49 L208.56 258.27 L209.02 258.05 L209.48 257.83 L209.94 257.62 L210.40 257.41 L210.85 257.20 L211.31 257.00 L211.77 256.80 L212.23 256.60 L212.69 256.41 L213.15 256.21 L213.61 256.03 L214.06 255.84 L214.52 255.66 L214.98 255.48 L215.44 255.30 L215.90 255.12 L216.36 254.95 L216.81 254.78 L217.27 254.62 L217.73 254.45 L218.19 254.29 L218.65 254.13 L219.11 253.98 L219.57 253.83 L220.02 253.68 L220.48 253.53 L220.94 253.38 L221.40 253.24 L221.86 253.10 L222.32 252.97 L222.78 252.83 L223.23 252.70 L223.69 252.57 L224.15 252.44 L224.61 252.32 L225.07 252.20 L225.53 252.08 L225.98 251.96 L226.44 251.85 L226.90 251.73 L227.36 251.62 L227.82 251.52 L228.28 251.41 L228.74 251.31 L229.19 251.21 L229.65 251.11 L230.11 251.02 L230.57 250.92 L231.03 250.83 L231.49 250.74 L231.95 250.66 L232.40 250.57 L232.86 250.49 L233.32 250.41 L233.78 250.34 L234.24 250.26 L234.70 250.19 L235.15 250.12 L235.61 250.05 L236.07 249.98 L236.53 249.92 L236.99 249.86 L237.45 249.80 L237.91 249.74 L238.36 249.69 L238.82 249.63 L239.28 249.58 L239.74 249.53 L240.20 249.49 L240.66 249.44 L241.11 249.40 L241.57 249.36 L242.03 249.33 L242.49 249.29 L242.95 249.26 L243.41 249.23 L243.87 249.20 L244.32 249.17 L244.78 249.14 L245.24 249.12 L245.70 249.10 L246.16 249.08 L246.62 249.07 L247.08 249.05 L247.53 249.04 L247.99 249.03 L248.45 249.02 L248.91 249.02 L249.37 249.01 L249.83 249.01 L250.28 249.01 L250.74 249.01 L251.20 249.02 L251.66 249.03 L252.12 249.03 L252.58 249.05 L253.04 249.06 L253.49 249.07 L253.95 249.09 L254.41 249.11 L254.87 249.13 L255.33 249.16 L255.79 249.18 L256.25 249.21 L256.70 249.24 L257.16 249.27 L257.62 249.31 L258.08 249.34 L258.54 249.38 L259.00 249.42 L259.45 249.46 L259.91 249.51 L260.37 249.56 L260.83 249.61 L261.29 249.66 L261.75 249.71 L262.21 249.77 L262.66 249.83 L263.12 249.89 L263.58 249.95 L264.04 250.01 L264.50 250.08 L264.96 250.15 L265.41 250.22 L265.87 250.29 L266.33 250.37 L266.79 250.45 L267.25 250.53 L267.71 250.61 L268.17 250.70 L268.62 250.78 L269.08 250.87 L269.54 250.97 L270.00 251.06 L270.46 251.16 L270.92 251.26 L271.38 251.36 L271.83 251.46 L272.29 251.57 L272.75 251.67 L273.21 251.79 L273.67 251.90 L274.13 252.01 L274.58 252.13 L275.04 252.25 L275.50 252.38 L275.96 252.50 L276.42 252.63 L276.88 252.76 L277.34 252.89 L277.79 253.03 L278.25 253.17 L278.71 253.31 L279.17 253.45 L279.63 253.60 L280.09 253.75 L280.55 253.90 L281.00 254.05 L281.46 254.21 L281.92 254.37 L282.38 254.53 L282.84 254.69 L283.30 254.86 L283.75 255.03 L284.21 255.21 L284.67 255.38 L285.13 255.56 L285.59 255.74 L286.05 255.93 L286.51 256.11 L286.96 256.30 L287.42 256.50 L287.88 256.69 L288.34 256.89 L288.80 257.09 L289.26 257.30 L289.71 257.51 L290.17 257.72 L290.63 257.93 L291.09 258.15 L291.55 258.37 L292.01 258.60 L292.47 258.82 L292.92 259.06 L293.38 259.29 L293.84 259.53 L294.30 259.77 L294.76 260.01 L295.22 260.26 L295.68 260.51 L296.13 260.76 L296.59 261.02 L297.05 261.28 L297.51 261.55 L297.97 261.82 L298.43 262.09 L298.88 262.36 L299.34 262.64 L299.80 262.93 L300.26 263.21 L300.72 263.50 L301.18 263.80 L301.64 264.10 L302.09 264.40 L302.55 264.71 L303.01 265.02 L303.47 265.33 L303.93 265.65 L304.39 265.97 L304.84 266.30 L305.30 266.63 L305.76 266.96 L306.22 267.30 L306.68 267.65 L307.14 268.00 L307.60 268.35 L308.05 268.70 L308.51 269.07 L308.97 269.43 L309.43 269.80 L309.89 270.18 L310.35 270.56 L310.81 270.94 L311.26 271.33 L311.72 271.73 L312.18 272.13 L312.64 272.53 L313.10 272.94 L313.56 273.35 L314.01 273.77 L314.47 274.20 L314.93 274.63 L315.39 275.06 L315.85 275.50 L316.31 275.95 L316.77 276.40 L317.22 276.86 L317.68 277.32 L318.14 277.79 L318.60 278.26 L319.06 278.74 L319.52 279.22 L319.98 279.71 L320.43 280.21 L320.89 280.71 L321.35 281.22 L321.81 281.74 L322.27 282.26 L322.73 282.78 L323.18 283.32 L323.64 283.86 L324.10 284.40 L324.56 284.96 L325.02 285.51 L325.48 286.08 L325.94 286.65 L326.39 287.23 L326.85 287.82 L327.31 288.41 L327.77 289.01 L328.23 289.61 L328.69 290.23 L329.14 290.85 L329.60 291.47 L330.06 292.11 L330.52 292.75 L330.98 293.40 L331.44 294.05 L331.90 294.72 L332.35 295.39 L332.81 296.07 L333.27 296.75 L333.73 297.45 L334.19 298.15 L334.65 298.86 L335.11 299.57 L335.56 300.30 L336.02 301.03 L336.48 301.77 L336.94 302.51 L337.40 303.27 L337.86 304.03 L338.31 304.80 L338.77 305.58 L339.23 306.37 L339.69 307.16 L340.15 307.97 L340.61 308.78 L341.07 309.59 L341.52 310.42 L341.98 311.25 L342.44 312.09 L342.90 312.94 L343.36 313.80 L343.82 314.66 L344.28 315.54 L344.73 316.41 L345.19 317.30 L345.65 318.19 L346.11 319.09 L346.57 320.00 L347.03 320.91 L347.48 321.83 L347.94 322.76 L348.40 323.69 L348.86 324.63 L349.32 325.58 L349.78 326.53 L350.24 327.48 L350.69 328.44 L351.15 329.40 L351.61 330.37 L352.07 331.34 L352.53 332.31 L352.99 333.29 L353.44 334.27 L353.90 335.25 L354.36 336.23 L354.82 337.21 L355.28 338.20 L355.74 339.18 L356.20 340.16 L356.65 341.13 L357.11 342.11 L357.57 343.08 L358.03 344.04 L358.49 345.00 L358.95 345.95 L359.41 346.90 L359.86 347.84 L360.32 348.76 L360.78 349.68 L361.24 350.58 L361.70 351.47 L362.16 352.35 L362.61 353.20 L363.07 354.05 L363.53 354.87 L363.99 355.67 L364.45 356.46 L364.91 357.22 L365.37 357.95 L365.82 358.66 L366.28 359.35 L366.74 360.00 L367.20 360.63 L367.66 361.23 L368.12 361.79 L368.58 362.33 L369.03 362.83 L369.49 363.30 L369.95 363.73 L370.41 364.14 L370.87 364.50 L371.33 364.84 L371.78 365.13 L372.24 365.40 L372.70 365.64 L372.70 369.85 L372.85 369.85 L434.29 369.85" fill="none" stroke="#c8702a" stroke-width="1.2" stroke-linejoin="round"/><path d="M67.50 369.85 L127.10 369.85 L127.26 369.85 L127.26 369.83 L127.41 369.80 L127.87 369.71 L128.33 369.61 L128.78 369.50 L129.24 369.40 L129.70 369.28 L130.16 369.17 L130.62 369.05 L131.08 368.93 L131.54 368.81 L131.99 368.68 L132.45 368.55 L132.91 368.42 L133.37 368.29 L133.83 368.16 L134.29 368.03 L134.75 367.90 L135.20 367.76 L135.66 367.63 L136.12 367.49 L136.58 367.36 L137.04 367.22 L137.50 367.08 L137.95 366.95 L138.41 366.81 L138.87 366.67 L139.33 366.54 L139.79 366.40 L140.25 366.26 L140.71 366.13 L141.16 365.99 L141.62 365.86 L142.08 365.72 L142.54 365.59 L143.00 365.45 L143.46 365.32 L143.91 365.18 L144.37 365.05 L144.83 364.92 L145.29 364.79 L145.75 364.65 L146.21 364.52 L146.67 364.39 L147.12 364.26 L147.58 364.13 L148.04 364.00 L148.50 363.87 L148.96 363.75 L149.42 363.62 L149.88 363.49 L150.33 363.37 L150.79 363.24 L151.25 363.11 L151.71 362.99 L152.17 362.87 L152.63 362.74 L153.08 362.62 L153.54 362.50 L154.00 362.38 L154.46 362.26 L154.92 362.14 L155.38 362.02 L155.84 361.90 L156.29 361.78 L156.75 361.66 L157.21 361.54 L157.67 361.43 L158.13 361.31 L158.59 361.19 L159.05 361.08 L159.50 360.96 L159.96 360.85 L160.42 360.74 L160.88 360.62 L161.34 360.51 L161.80 360.40 L162.25 360.29 L162.71 360.18 L163.17 360.07 L163.63 359.96 L164.09 359.85 L164.55 359.74 L165.01 359.64 L165.46 359.53 L165.92 359.42 L166.38 359.32 L166.84 359.21 L167.30 359.11 L167.76 359.00 L168.21 358.90 L168.67 358.79 L169.13 358.69 L169.59 358.59 L170.05 358.49 L170.51 358.39 L170.97 358.29 L171.42 358.19 L171.88 358.09 L172.34 357.99 L172.80 357.89 L173.26 357.79 L173.72 357.69 L174.18 357.60 L174.63 357.50 L175.09 357.40 L175.55 357.31 L176.01 357.21 L176.47 357.12 L176.93 357.02 L177.38 356.93 L177.84 356.84 L178.30 356.75 L178.76 356.65 L179.22 356.56 L179.68 356.47 L180.14 356.38 L180.59 356.29 L181.05 356.20 L181.51 356.11 L181.97 356.03 L182.43 355.94 L182.89 355.85 L183.35 355.76 L183.80 355.68 L184.26 355.59 L184.72 355.51 L185.18 355.42 L185.64 355.34 L186.10 355.26 L186.55 355.17 L187.01 355.09 L187.47 355.01 L187.93 354.93 L188.39 354.85 L188.85 354.77 L189.31 354.69 L189.76 354.61 L190.22 354.53 L190.68 354.45 L191.14 354.37 L191.60 354.29 L192.06 354.22 L192.51 354.14 L192.97 354.06 L193.43 353.99 L193.89 353.92 L194.35 353.84 L194.81 353.77 L195.27 353.69 L195.72 353.62 L196.18 353.55 L196.64 353.48 L197.10 353.41 L197.56 353.34 L198.02 353.27 L198.48 353.20 L198.93 353.13 L199.39 353.06 L199.85 352.99 L200.31 352.93 L200.77 352.86 L201.23 352.79 L201.68 352.73 L202.14 352.66 L202.60 352.60 L203.06 352.54 L203.52 352.47 L203.98 352.41 L204.44 352.35 L204.89 352.29 L205.35 352.23 L205.81 352.17 L206.27 352.11 L206.73 352.05 L207.19 351.99 L207.65 351.93 L208.10 351.87 L208.56 351.81 L209.02 351.76 L209.48 351.70 L209.94 351.65 L210.40 351.59 L210.85 351.54 L211.31 351.49 L211.77 351.43 L212.23 351.38 L212.69 351.33 L213.15 351.28 L213.61 351.23 L214.06 351.18 L214.52 351.13 L214.98 351.08 L215.44 351.03 L215.90 350.98 L216.36 350.94 L216.81 350.89 L217.27 350.84 L217.73 350.80 L218.19 350.75 L218.65 350.71 L219.11 350.67 L219.57 350.62 L220.02 350.58 L220.48 350.54 L220.94 350.50 L221.40 350.46 L221.86 350.42 L222.32 350.38 L222.78 350.34 L223.23 350.30 L223.69 350.27 L224.15 350.23 L224.61 350.19 L225.07 350.16 L225.53 350.12 L225.98 350.09 L226.44 350.06 L226.90 350.02 L227.36 349.99 L227.82 349.96 L228.28 349.93 L228.74 349.90 L229.19 349.87 L229.65 349.84 L230.11 349.81 L230.57 349.78 L231.03 349.76 L231.49 349.73 L231.95 349.70 L232.40 349.68 L232.86 349.65 L233.32 349.63 L233.78 349.61 L234.24 349.58 L234.70 349.56 L235.15 349.54 L235.61 349.52 L236.07 349.50 L236.53 349.48 L236.99 349.46 L237.45 349.44 L237.91 349.43 L238.36 349.41 L238.82 349.39 L239.28 349.38 L239.74 349.36 L240.20 349.35 L240.66 349.33 L241.11 349.32 L241.57 349.31 L242.03 349.30 L242.49 349.29 L242.95 349.28 L243.41 349.27 L243.87 349.26 L244.32 349.25 L244.78 349.24 L245.24 349.23 L245.70 349.23 L246.16 349.22 L246.62 349.22 L247.08 349.21 L247.53 349.21 L247.99 349.21 L248.45 349.20 L248.91 349.20 L249.37 349.20 L249.83 349.20 L250.28 349.20 L250.74 349.20 L251.20 349.20 L251.66 349.20 L252.12 349.21 L252.58 349.21 L253.04 349.21 L253.49 349.22 L253.95 349.23 L254.41 349.23 L254.87 349.24 L255.33 349.25 L255.79 349.25 L256.25 349.26 L256.70 349.27 L257.16 349.28 L257.62 349.29 L258.08 349.30 L258.54 349.32 L259.00 349.33 L259.45 349.34 L259.91 349.35 L260.37 349.37 L260.83 349.38 L261.29 349.40 L261.75 349.42 L262.21 349.43 L262.66 349.45 L263.12 349.47 L263.58 349.49 L264.04 349.51 L264.50 349.53 L264.96 349.55 L265.41 349.57 L265.87 349.59 L266.33 349.62 L266.79 349.64 L267.25 349.67 L267.71 349.69 L268.17 349.72 L268.62 349.74 L269.08 349.77 L269.54 349.80 L270.00 349.82 L270.46 349.85 L270.92 349.88 L271.38 349.91 L271.83 349.94 L272.29 349.97 L272.75 350.01 L273.21 350.04 L273.67 350.07 L274.13 350.11 L274.58 350.14 L275.04 350.18 L275.50 350.21 L275.96 350.25 L276.42 350.28 L276.88 350.32 L277.34 350.36 L277.79 350.40 L278.25 350.44 L278.71 350.48 L279.17 350.52 L279.63 350.56 L280.09 350.60 L280.55 350.64 L281.00 350.69 L281.46 350.73 L281.92 350.77 L282.38 350.82 L282.84 350.86 L283.30 350.91 L283.75 350.96 L284.21 351.00 L284.67 351.05 L285.13 351.10 L285.59 351.15 L286.05 351.20 L286.51 351.25 L286.96 351.30 L287.42 351.35 L287.88 351.40 L288.34 351.46 L288.80 351.51 L289.26 351.56 L289.71 351.62 L290.17 351.67 L290.63 351.73 L291.09 351.78 L291.55 351.84 L292.01 351.90 L292.47 351.96 L292.92 352.01 L293.38 352.07 L293.84 352.13 L294.30 352.19 L294.76 352.25 L295.22 352.32 L295.68 352.38 L296.13 352.44 L296.59 352.50 L297.05 352.57 L297.51 352.63 L297.97 352.69 L298.43 352.76 L298.88 352.82 L299.34 352.89 L299.80 352.96 L300.26 353.03 L300.72 353.09 L301.18 353.16 L301.64 353.23 L302.09 353.30 L302.55 353.37 L303.01 353.44 L303.47 353.51 L303.93 353.58 L304.39 353.66 L304.84 353.73 L305.30 353.80 L305.76 353.88 L306.22 353.95 L306.68 354.02 L307.14 354.10 L307.60 354.18 L308.05 354.25 L308.51 354.33 L308.97 354.41 L309.43 354.49 L309.89 354.56 L310.35 354.64 L310.81 354.72 L311.26 354.80 L311.72 354.88 L312.18 354.96 L312.64 355.05 L313.10 355.13 L313.56 355.21 L314.01 355.29 L314.47 355.38 L314.93 355.46 L315.39 355.55 L315.85 355.63 L316.31 355.72 L316.77 355.80 L317.22 355.89 L317.68 355.98 L318.14 356.07 L318.60 356.16 L319.06 356.24 L319.52 356.33 L319.98 356.42 L320.43 356.51 L320.89 356.61 L321.35 356.70 L321.81 356.79 L322.27 356.88 L322.73 356.97 L323.18 357.07 L323.64 357.16 L324.10 357.26 L324.56 357.35 L325.02 357.45 L325.48 357.54 L325.94 357.64 L326.39 357.74 L326.85 357.84 L327.31 357.93 L327.77 358.03 L328.23 358.13 L328.69 358.23 L329.14 358.33 L329.60 358.43 L330.06 358.53 L330.52 358.64 L330.98 358.74 L331.44 358.84 L331.90 358.95 L332.35 359.05 L332.81 359.15 L333.27 359.26 L333.73 359.37 L334.19 359.47 L334.65 359.58 L335.11 359.69 L335.56 359.79 L336.02 359.90 L336.48 360.01 L336.94 360.12 L337.40 360.23 L337.86 360.34 L338.31 360.45 L338.77 360.56 L339.23 360.68 L339.69 360.79 L340.15 360.90 L340.61 361.02 L341.07 361.13 L341.52 361.25 L341.98 361.36 L342.44 361.48 L342.90 361.60 L343.36 361.71 L343.82 361.83 L344.28 361.95 L344.73 362.07 L345.19 362.19 L345.65 362.31 L346.11 362.43 L346.57 362.56 L347.03 362.68 L347.48 362.80 L347.94 362.92 L348.40 363.05 L348.86 363.17 L349.32 363.30 L349.78 363.42 L350.24 363.55 L350.69 363.68 L351.15 363.81 L351.61 363.93 L352.07 364.06 L352.53 364.19 L352.99 364.32 L353.44 364.45 L353.90 364.58 L354.36 364.72 L354.82 364.85 L355.28 364.98 L355.74 365.11 L356.20 365.25 L356.65 365.38 L357.11 365.52 L357.57 365.65 L358.03 365.79 L358.49 365.92 L358.95 366.06 L359.41 366.19 L359.86 366.33 L360.32 366.46 L360.78 366.60 L361.24 366.74 L361.70 366.87 L362.16 367.01 L362.61 367.15 L363.07 367.28 L363.53 367.42 L363.99 367.56 L364.45 367.69 L364.91 367.82 L365.37 367.96 L365.82 368.09 L366.28 368.22 L366.74 368.36 L367.20 368.48 L367.66 368.61 L368.12 368.74 L368.58 368.86 L369.03 368.99 L369.49 369.11 L369.95 369.22 L370.41 369.34 L370.87 369.45 L371.33 369.55 L371.78 369.66 L372.24 369.75 L372.70 369.84 L372.70 369.85 L372.85 369.85 L434.29 369.85" fill="none" stroke="#4169e1" stroke-width="1.2" stroke-linejoin="round"/><path d="M67.50 369.85 L127.10 369.85 L127.26 369.85 L127.26 369.85 L127.41 369.84 L127.87 369.82 L128.33 369.80 L128.78 369.78 L129.24 369.75 L129.70 369.73 L130.16 369.71 L130.62 369.68 L131.08 369.66 L131.54 369.63 L131.99 369.60 L132.45 369.58 L132.91 369.55 L133.37 369.52 L133.83 369.49 L134.29 369.46 L134.75 369.43 L135.20 369.40 L135.66 369.37 L136.12 369.34 L136.58 369.31 L137.04 369.28 L137.50 369.25 L137.95 369.22 L138.41 369.19 L138.87 369.15 L139.33 369.12 L139.79 369.09 L140.25 369.05 L140.71 369.02 L141.16 368.99 L141.62 368.95 L142.08 368.92 L142.54 368.88 L143.00 368.85 L143.46 368.81 L143.91 368.78 L144.37 368.74 L144.83 368.70 L145.29 368.67 L145.75 368.63 L146.21 368.60 L146.67 368.56 L147.12 368.53 L147.58 368.49 L148.04 368.45 L148.50 368.42 L148.96 368.38 L149.42 368.34 L149.88 368.31 L150.33 368.27 L150.79 368.24 L151.25 368.20 L151.71 368.17 L152.17 368.13 L152.63 368.10 L153.08 368.06 L153.54 368.03 L154.00 367.99 L154.46 367.96 L154.92 367.92 L155.38 367.89 L155.84 367.86 L156.29 367.82 L156.75 367.79 L157.21 367.76 L157.67 367.72 L158.13 367.69 L158.59 367.66 L159.05 367.63 L159.50 367.60 L159.96 367.57 L160.42 367.54 L160.88 367.51 L161.34 367.48 L161.80 367.45 L162.25 367.42 L162.71 367.40 L163.17 367.37 L163.63 367.34 L164.09 367.32 L164.55 367.29 L165.01 367.26 L165.46 367.24 L165.92 367.21 L166.38 367.19 L166.84 367.17 L167.30 367.15 L167.76 367.12 L168.21 367.10 L168.67 367.08 L169.13 367.06 L169.59 367.04 L170.05 367.02 L170.51 367.00 L170.97 366.98 L171.42 366.97 L171.88 366.95 L172.34 366.93 L172.80 366.92 L173.26 366.90 L173.72 366.89 L174.18 366.87 L174.63 366.86 L175.09 366.85 L175.55 366.84 L176.01 366.82 L176.47 366.81 L176.93 366.80 L177.38 366.79 L177.84 366.78 L178.30 366.77 L178.76 366.77 L179.22 366.76 L179.68 366.75 L180.14 366.75 L180.59 366.74 L181.05 366.74 L181.51 366.73 L181.97 366.73 L182.43 366.72 L182.89 366.72 L183.35 366.72 L183.80 366.72 L184.26 366.72 L184.72 366.72 L185.18 366.72 L185.64 366.72 L186.10 366.72 L186.55 366.72 L187.01 366.72 L187.47 366.73 L187.93 366.73 L188.39 366.74 L188.85 366.74 L189.31 366.74 L189.76 366.75 L190.22 366.76 L190.68 366.76 L191.14 366.77 L191.60 366.78 L192.06 366.79 L192.51 366.79 L192.97 366.80 L193.43 366.81 L193.89 366.82 L194.35 366.83 L194.81 366.84 L195.27 366.86 L195.72 366.87 L196.18 366.88 L196.64 366.89 L197.10 366.91 L197.56 366.92 L198.02 366.93 L198.48 366.95 L198.93 366.96 L199.39 366.98 L199.85 366.99 L200.31 367.01 L200.77 367.02 L201.23 367.04 L201.68 367.05 L202.14 367.07 L202.60 367.09 L203.06 367.10 L203.52 367.12 L203.98 367.14 L204.44 367.16 L204.89 367.18 L205.35 367.19 L205.81 367.21 L206.27 367.23 L206.73 367.25 L207.19 367.27 L207.65 367.29 L208.10 367.31 L208.56 367.33 L209.02 367.35 L209.48 367.37 L209.94 367.39 L210.40 367.41 L210.85 367.43 L211.31 367.45 L211.77 367.47 L212.23 367.49 L212.69 367.51 L213.15 367.53 L213.61 367.55 L214.06 367.58 L214.52 367.60 L214.98 367.62 L215.44 367.64 L215.90 367.66 L216.36 367.68 L216.81 367.70 L217.27 367.72 L217.73 367.74 L218.19 367.76 L218.65 367.79 L219.11 367.81 L219.57 367.83 L220.02 367.85 L220.48 367.87 L220.94 367.89 L221.40 367.91 L221.86 367.93 L222.32 367.95 L222.78 367.97 L223.23 367.99 L223.69 368.01 L224.15 368.03 L224.61 368.05 L225.07 368.07 L225.53 368.08 L225.98 368.10 L226.44 368.12 L226.90 368.14 L227.36 368.16 L227.82 368.18 L228.28 368.19 L228.74 368.21 L229.19 368.23 L229.65 368.24 L230.11 368.26 L230.57 368.28 L231.03 368.29 L231.49 368.31 L231.95 368.32 L232.40 368.34 L232.86 368.35 L233.32 368.37 L233.78 368.38 L234.24 368.40 L234.70 368.41 L235.15 368.42 L235.61 368.44 L236.07 368.45 L236.53 368.46 L236.99 368.47 L237.45 368.48 L237.91 368.49 L238.36 368.50 L238.82 368.52 L239.28 368.52 L239.74 368.53 L240.20 368.54 L240.66 368.55 L241.11 368.56 L241.57 368.57 L242.03 368.58 L242.49 368.58 L242.95 368.59 L243.41 368.60 L243.87 368.60 L244.32 368.61 L244.78 368.61 L245.24 368.62 L245.70 368.62 L246.16 368.63 L246.62 368.63 L247.08 368.63 L247.53 368.63 L247.99 368.64 L248.45 368.64 L248.91 368.64 L249.37 368.64 L249.83 368.64 L250.28 368.64 L250.74 368.64 L251.20 368.64 L251.66 368.64 L252.12 368.64 L252.58 368.63 L253.04 368.63 L253.49 368.63 L253.95 368.62 L254.41 368.62 L254.87 368.62 L255.33 368.61 L255.79 368.61 L256.25 368.60 L256.70 368.59 L257.16 368.59 L257.62 368.58 L258.08 368.57 L258.54 368.56 L259.00 368.56 L259.45 368.55 L259.91 368.54 L260.37 368.53 L260.83 368.52 L261.29 368.51 L261.75 368.50 L262.21 368.49 L262.66 368.48 L263.12 368.47 L263.58 368.45 L264.04 368.44 L264.50 368.43 L264.96 368.42 L265.41 368.40 L265.87 368.39 L266.33 368.38 L266.79 368.36 L267.25 368.35 L267.71 368.33 L268.17 368.32 L268.62 368.30 L269.08 368.29 L269.54 368.27 L270.00 368.25 L270.46 368.24 L270.92 368.22 L271.38 368.20 L271.83 368.18 L272.29 368.17 L272.75 368.15 L273.21 368.13 L273.67 368.11 L274.13 368.09 L274.58 368.08 L275.04 368.06 L275.50 368.04 L275.96 368.02 L276.42 368.00 L276.88 367.98 L277.34 367.96 L277.79 367.94 L278.25 367.92 L278.71 367.90 L279.17 367.88 L279.63 367.86 L280.09 367.84 L280.55 367.82 L281.00 367.80 L281.46 367.78 L281.92 367.75 L282.38 367.73 L282.84 367.71 L283.30 367.69 L283.75 367.67 L284.21 367.65 L284.67 367.63 L285.13 367.61 L285.59 367.59 L286.05 367.57 L286.51 367.54 L286.96 367.52 L287.42 367.50 L287.88 367.48 L288.34 367.46 L288.80 367.44 L289.26 367.42 L289.71 367.40 L290.17 367.38 L290.63 367.36 L291.09 367.34 L291.55 367.32 L292.01 367.30 L292.47 367.28 L292.92 367.26 L293.38 367.24 L293.84 367.22 L294.30 367.20 L294.76 367.19 L295.22 367.17 L295.68 367.15 L296.13 367.13 L296.59 367.11 L297.05 367.10 L297.51 367.08 L297.97 367.06 L298.43 367.05 L298.88 367.03 L299.34 367.01 L299.80 367.00 L300.26 366.98 L300.72 366.97 L301.18 366.95 L301.64 366.94 L302.09 366.93 L302.55 366.91 L303.01 366.90 L303.47 366.89 L303.93 366.87 L304.39 366.86 L304.84 366.85 L305.30 366.84 L305.76 366.83 L306.22 366.82 L306.68 366.81 L307.14 366.80 L307.60 366.79 L308.05 366.78 L308.51 366.77 L308.97 366.77 L309.43 366.76 L309.89 366.75 L310.35 366.75 L310.81 366.74 L311.26 366.74 L311.72 366.73 L312.18 366.73 L312.64 366.73 L313.10 366.72 L313.56 366.72 L314.01 366.72 L314.47 366.72 L314.93 366.72 L315.39 366.72 L315.85 366.72 L316.31 366.72 L316.77 366.72 L317.22 366.72 L317.68 366.73 L318.14 366.73 L318.60 366.73 L319.06 366.74 L319.52 366.74 L319.98 366.75 L320.43 366.76 L320.89 366.76 L321.35 366.77 L321.81 366.78 L322.27 366.79 L322.73 366.80 L323.18 366.81 L323.64 366.82 L324.10 366.83 L324.56 366.84 L325.02 366.85 L325.48 366.87 L325.94 366.88 L326.39 366.89 L326.85 366.91 L327.31 366.92 L327.77 366.94 L328.23 366.96 L328.69 366.97 L329.14 366.99 L329.60 367.01 L330.06 367.03 L330.52 367.05 L330.98 367.07 L331.44 367.09 L331.90 367.11 L332.35 367.13 L332.81 367.16 L333.27 367.18 L333.73 367.20 L334.19 367.23 L334.65 367.25 L335.11 367.28 L335.56 367.30 L336.02 367.33 L336.48 367.35 L336.94 367.38 L337.40 367.41 L337.86 367.44 L338.31 367.46 L338.77 367.49 L339.23 367.52 L339.69 367.55 L340.15 367.58 L340.61 367.61 L341.07 367.64 L341.52 367.68 L341.98 367.71 L342.44 367.74 L342.90 367.77 L343.36 367.80 L343.82 367.84 L344.28 367.87 L344.73 367.90 L345.19 367.94 L345.65 367.97 L346.11 368.01 L346.57 368.04 L347.03 368.08 L347.48 368.11 L347.94 368.15 L348.40 368.18 L348.86 368.22 L349.32 368.25 L349.78 368.29 L350.24 368.33 L350.69 368.36 L351.15 368.40 L351.61 368.43 L352.07 368.47 L352.53 368.51 L352.99 368.54 L353.44 368.58 L353.90 368.61 L354.36 368.65 L354.82 368.69 L355.28 368.72 L355.74 368.76 L356.20 368.79 L356.65 368.83 L357.11 368.86 L357.57 368.90 L358.03 368.93 L358.49 368.97 L358.95 369.00 L359.41 369.04 L359.86 369.07 L360.32 369.10 L360.78 369.14 L361.24 369.17 L361.70 369.20 L362.16 369.23 L362.61 369.26 L363.07 369.30 L363.53 369.33 L363.99 369.36 L364.45 369.39 L364.91 369.42 L365.37 369.45 L365.82 369.48 L366.28 369.51 L366.74 369.53 L367.20 369.56 L367.66 369.59 L368.12 369.62 L368.58 369.64 L369.03 369.67 L369.49 369.69 L369.95 369.72 L370.41 369.74 L370.87 369.76 L371.33 369.79 L371.78 369.81 L372.24 369.83 L372.70 369.85 L372.70 369.85 L372.85 369.85 L434.29 369.85" fill="none" stroke="#ff2020" stroke-width="1.2" stroke-linejoin="round"/><path d="M67.50 369.85 L127.10 369.85 L127.26 369.85 L127.26 369.83 L127.41 369.79 L127.87 369.68 L128.33 369.56 L128.78 369.43 L129.24 369.30 L129.70 369.17 L130.16 369.03 L130.62 368.88 L131.08 368.74 L131.54 368.59 L131.99 368.43 L132.45 368.28 L132.91 368.12 L133.37 367.96 L133.83 367.80 L134.29 367.64 L134.75 367.48 L135.20 367.32 L135.66 367.15 L136.12 366.99 L136.58 366.82 L137.04 366.65 L137.50 366.48 L137.95 366.32 L138.41 366.15 L138.87 365.98 L139.33 365.81 L139.79 365.64 L140.25 365.47 L140.71 365.30 L141.16 365.13 L141.62 364.96 L142.08 364.79 L142.54 364.62 L143.00 364.45 L143.46 364.28 L143.91 364.11 L144.37 363.94 L144.83 363.77 L145.29 363.61 L145.75 363.44 L146.21 363.27 L146.67 363.10 L147.12 362.94 L147.58 362.77 L148.04 362.61 L148.50 362.44 L148.96 362.28 L149.42 362.11 L149.88 361.95 L150.33 361.79 L150.79 361.63 L151.25 361.47 L151.71 361.31 L152.17 361.15 L152.63 360.99 L153.08 360.83 L153.54 360.67 L154.00 360.52 L154.46 360.36 L154.92 360.21 L155.38 360.05 L155.84 359.90 L156.29 359.75 L156.75 359.60 L157.21 359.45 L157.67 359.30 L158.13 359.15 L158.59 359.01 L159.05 358.86 L159.50 358.71 L159.96 358.57 L160.42 358.43 L160.88 358.28 L161.34 358.14 L161.80 358.00 L162.25 357.86 L162.71 357.72 L163.17 357.59 L163.63 357.45 L164.09 357.32 L164.55 357.18 L165.01 357.05 L165.46 356.92 L165.92 356.79 L166.38 356.66 L166.84 356.53 L167.30 356.40 L167.76 356.27 L168.21 356.15 L168.67 356.02 L169.13 355.90 L169.59 355.78 L170.05 355.66 L170.51 355.54 L170.97 355.42 L171.42 355.30 L171.88 355.18 L172.34 355.07 L172.80 354.96 L173.26 354.84 L173.72 354.73 L174.18 354.62 L174.63 354.51 L175.09 354.40 L175.55 354.29 L176.01 354.19 L176.47 354.08 L176.93 353.98 L177.38 353.87 L177.84 353.77 L178.30 353.67 L178.76 353.57 L179.22 353.47 L179.68 353.37 L180.14 353.28 L180.59 353.18 L181.05 353.09 L181.51 353.00 L181.97 352.90 L182.43 352.81 L182.89 352.72 L183.35 352.63 L183.80 352.55 L184.26 352.46 L184.72 352.38 L185.18 352.29 L185.64 352.21 L186.10 352.13 L186.55 352.04 L187.01 351.96 L187.47 351.89 L187.93 351.81 L188.39 351.73 L188.85 351.65 L189.31 351.58 L189.76 351.51 L190.22 351.43 L190.68 351.36 L191.14 351.29 L191.60 351.22 L192.06 351.15 L192.51 351.09 L192.97 351.02 L193.43 350.95 L193.89 350.89 L194.35 350.82 L194.81 350.76 L195.27 350.70 L195.72 350.64 L196.18 350.58 L196.64 350.52 L197.10 350.46 L197.56 350.41 L198.02 350.35 L198.48 350.29 L198.93 350.24 L199.39 350.19 L199.85 350.13 L200.31 350.08 L200.77 350.03 L201.23 349.98 L201.68 349.93 L202.14 349.88 L202.60 349.84 L203.06 349.79 L203.52 349.74 L203.98 349.70 L204.44 349.66 L204.89 349.61 L205.35 349.57 L205.81 349.53 L206.27 349.49 L206.73 349.45 L207.19 349.41 L207.65 349.37 L208.10 349.33 L208.56 349.29 L209.02 349.26 L209.48 349.22 L209.94 349.19 L210.40 349.15 L210.85 349.12 L211.31 349.09 L211.77 349.05 L212.23 349.02 L212.69 348.99 L213.15 348.96 L213.61 348.93 L214.06 348.90 L214.52 348.87 L214.98 348.85 L215.44 348.82 L215.90 348.79 L216.36 348.77 L216.81 348.74 L217.27 348.72 L217.73 348.69 L218.19 348.67 L218.65 348.64 L219.11 348.62 L219.57 348.60 L220.02 348.58 L220.48 348.56 L220.94 348.54 L221.40 348.52 L221.86 348.50 L222.32 348.48 L222.78 348.46 L223.23 348.44 L223.69 348.42 L224.15 348.41 L224.61 348.39 L225.07 348.37 L225.53 348.36 L225.98 348.34 L226.44 348.33 L226.90 348.31 L227.36 348.30 L227.82 348.29 L228.28 348.27 L228.74 348.26 L229.19 348.25 L229.65 348.23 L230.11 348.22 L230.57 348.21 L231.03 348.20 L231.49 348.19 L231.95 348.18 L232.40 348.17 L232.86 348.16 L233.32 348.15 L233.78 348.14 L234.24 348.13 L234.70 348.12 L235.15 348.11 L235.61 348.11 L236.07 348.10 L236.53 348.09 L236.99 348.08 L237.45 348.08 L237.91 348.07 L238.36 348.06 L238.82 348.06 L239.28 348.05 L239.74 348.05 L240.20 348.04 L240.66 348.04 L241.11 348.03 L241.57 348.03 L242.03 348.02 L242.49 348.02 L242.95 348.02 L243.41 348.01 L243.87 348.01 L244.32 348.01 L244.78 348.00 L245.24 348.00 L245.70 348.00 L246.16 348.00 L246.62 348.00 L247.08 347.99 L247.53 347.99 L247.99 347.99 L248.45 347.99 L248.91 347.99 L249.37 347.99 L249.83 347.99 L250.28 347.99 L250.74 347.99 L251.20 347.99 L251.66 347.99 L252.12 347.99 L252.58 347.99 L253.04 348.00 L253.49 348.00 L253.95 348.00 L254.41 348.00 L254.87 348.00 L255.33 348.01 L255.79 348.01 L256.25 348.01 L256.70 348.01 L257.16 348.02 L257.62 348.02 L258.08 348.03 L258.54 348.03 L259.00 348.03 L259.45 348.04 L259.91 348.04 L260.37 348.05 L260.83 348.06 L261.29 348.06 L261.75 348.07 L262.21 348.07 L262.66 348.08 L263.12 348.09 L263.58 348.09 L264.04 348.10 L264.50 348.11 L264.96 348.12 L265.41 348.13 L265.87 348.13 L266.33 348.14 L266.79 348.15 L267.25 348.16 L267.71 348.17 L268.17 348.18 L268.62 348.19 L269.08 348.20 L269.54 348.22 L270.00 348.23 L270.46 348.24 L270.92 348.25 L271.38 348.26 L271.83 348.28 L272.29 348.29 L272.75 348.31 L273.21 348.32 L273.67 348.33 L274.13 348.35 L274.58 348.37 L275.04 348.38 L275.50 348.40 L275.96 348.41 L276.42 348.43 L276.88 348.45 L277.34 348.47 L277.79 348.49 L278.25 348.51 L278.71 348.53 L279.17 348.55 L279.63 348.57 L280.09 348.59 L280.55 348.61 L281.00 348.63 L281.46 348.66 L281.92 348.68 L282.38 348.70 L282.84 348.73 L283.30 348.75 L283.75 348.78 L284.21 348.80 L284.67 348.83 L285.13 348.86 L285.59 348.89 L286.05 348.92 L286.51 348.94 L286.96 348.97 L287.42 349.01 L287.88 349.04 L288.34 349.07 L288.80 349.10 L289.26 349.13 L289.71 349.17 L290.17 349.20 L290.63 349.24 L291.09 349.27 L291.55 349.31 L292.01 349.35 L292.47 349.39 L292.92 349.43 L293.38 349.47 L293.84 349.51 L294.30 349.55 L294.76 349.59 L295.22 349.63 L295.68 349.68 L296.13 349.72 L296.59 349.77 L297.05 349.81 L297.51 349.86 L297.97 349.91 L298.43 349.96 L298.88 350.00 L299.34 350.06 L299.80 350.11 L300.26 350.16 L300.72 350.21 L301.18 350.27 L301.64 350.32 L302.09 350.38 L302.55 350.43 L303.01 350.49 L303.47 350.55 L303.93 350.61 L304.39 350.67 L304.84 350.73 L305.30 350.79 L305.76 350.85 L306.22 350.92 L306.68 350.98 L307.14 351.05 L307.60 351.12 L308.05 351.18 L308.51 351.25 L308.97 351.32 L309.43 351.40 L309.89 351.47 L310.35 351.54 L310.81 351.61 L311.26 351.69 L311.72 351.77 L312.18 351.84 L312.64 351.92 L313.10 352.00 L313.56 352.08 L314.01 352.16 L314.47 352.25 L314.93 352.33 L315.39 352.41 L315.85 352.50 L316.31 352.59 L316.77 352.68 L317.22 352.77 L317.68 352.86 L318.14 352.95 L318.60 353.04 L319.06 353.13 L319.52 353.23 L319.98 353.32 L320.43 353.42 L320.89 353.52 L321.35 353.62 L321.81 353.72 L322.27 353.82 L322.73 353.92 L323.18 354.03 L323.64 354.13 L324.10 354.24 L324.56 354.34 L325.02 354.45 L325.48 354.56 L325.94 354.67 L326.39 354.78 L326.85 354.89 L327.31 355.01 L327.77 355.12 L328.23 355.24 L328.69 355.36 L329.14 355.47 L329.60 355.59 L330.06 355.71 L330.52 355.84 L330.98 355.96 L331.44 356.08 L331.90 356.21 L332.35 356.33 L332.81 356.46 L333.27 356.59 L333.73 356.72 L334.19 356.85 L334.65 356.98 L335.11 357.11 L335.56 357.24 L336.02 357.38 L336.48 357.51 L336.94 357.65 L337.40 357.79 L337.86 357.93 L338.31 358.07 L338.77 358.21 L339.23 358.35 L339.69 358.49 L340.15 358.64 L340.61 358.78 L341.07 358.93 L341.52 359.07 L341.98 359.22 L342.44 359.37 L342.90 359.52 L343.36 359.67 L343.82 359.82 L344.28 359.97 L344.73 360.13 L345.19 360.28 L345.65 360.44 L346.11 360.59 L346.57 360.75 L347.03 360.90 L347.48 361.06 L347.94 361.22 L348.40 361.38 L348.86 361.54 L349.32 361.70 L349.78 361.86 L350.24 362.03 L350.69 362.19 L351.15 362.35 L351.61 362.52 L352.07 362.68 L352.53 362.85 L352.99 363.01 L353.44 363.18 L353.90 363.35 L354.36 363.52 L354.82 363.68 L355.28 363.85 L355.74 364.02 L356.20 364.19 L356.65 364.36 L357.11 364.53 L357.57 364.70 L358.03 364.87 L358.49 365.04 L358.95 365.21 L359.41 365.38 L359.86 365.55 L360.32 365.72 L360.78 365.89 L361.24 366.06 L361.70 366.23 L362.16 366.39 L362.61 366.56 L363.07 366.73 L363.53 366.90 L363.99 367.06 L364.45 367.23 L364.91 367.39 L365.37 367.56 L365.82 367.72 L366.28 367.88 L366.74 368.04 L367.20 368.20 L367.66 368.35 L368.12 368.51 L368.58 368.66 L369.03 368.80 L369.49 368.95 L369.95 369.09 L370.41 369.23 L370.87 369.36 L371.33 369.49 L371.78 369.61 L372.24 369.73 L372.70 369.84 L372.70 369.85 L372.85 369.85 L434.29 369.85" fill="none" stroke="#9acd32" stroke-width="1.2" stroke-linejoin="round"/><path d="M67.50 369.85 L127.10 369.85 L127.26 369.85 L127.26 365.58 L127.41 365.47 L127.87 365.11 L128.33 364.71 L128.78 364.27 L129.24 363.79 L129.70 363.27 L130.16 362.71 L130.62 362.12 L131.08 361.49 L131.54 360.82 L131.99 360.12 L132.45 359.38 L132.91 358.61 L133.37 357.81 L133.83 356.98 L134.29 356.13 L134.75 355.24 L135.20 354.33 L135.66 353.39 L136.12 352.44 L136.58 351.46 L137.04 350.46 L137.50 349.44 L137.95 348.40 L138.41 347.35 L138.87 346.29 L139.33 345.21 L139.79 344.12 L140.25 343.02 L140.71 341.91 L141.16 340.79 L141.62 339.66 L142.08 338.53 L142.54 337.39 L143.00 336.25 L143.46 335.11 L143.91 333.96 L144.37 332.81 L144.83 331.66 L145.29 330.51 L145.75 329.36 L146.21 328.21 L146.67 327.07 L147.12 325.92 L147.58 324.78 L148.04 323.64 L148.50 322.51 L148.96 321.38 L149.42 320.25 L149.88 319.13 L150.33 318.02 L150.79 316.91 L151.25 315.81 L151.71 314.71 L152.17 313.63 L152.63 312.54 L153.08 311.47 L153.54 310.40 L154.00 309.34 L154.46 308.29 L154.92 307.24 L155.38 306.21 L155.84 305.18 L156.29 304.16 L156.75 303.15 L157.21 302.15 L157.67 301.15 L158.13 300.17 L158.59 299.19 L159.05 298.22 L159.50 297.26 L159.96 296.31 L160.42 295.37 L160.88 294.43 L161.34 293.51 L161.80 292.60 L162.25 291.69 L162.71 290.79 L163.17 289.90 L163.63 289.02 L164.09 288.15 L164.55 287.29 L165.01 286.44 L165.46 285.59 L165.92 284.76 L166.38 283.93 L166.84 283.11 L167.30 282.30 L167.76 281.50 L168.21 280.71 L168.67 279.92 L169.13 279.15 L169.59 278.38 L170.05 277.62 L170.51 276.87 L170.97 276.12 L171.42 275.39 L171.88 274.66 L172.34 273.95 L172.80 273.24 L173.26 272.53 L173.72 271.84 L174.18 271.15 L174.63 270.47 L175.09 269.80 L175.55 269.14 L176.01 268.48 L176.47 267.84 L176.93 267.19 L177.38 266.56 L177.84 265.94 L178.30 265.32 L178.76 264.70 L179.22 264.10 L179.68 263.50 L180.14 262.91 L180.59 262.33 L181.05 261.75 L181.51 261.18 L181.97 260.62 L182.43 260.07 L182.89 259.52 L183.35 258.97 L183.80 258.44 L184.26 257.91 L184.72 257.38 L185.18 256.87 L185.64 256.36 L186.10 255.85 L186.55 255.35 L187.01 254.86 L187.47 254.38 L187.93 253.90 L188.39 253.42 L188.85 252.96 L189.31 252.49 L189.76 252.04 L190.22 251.59 L190.68 251.14 L191.14 250.70 L191.60 250.27 L192.06 249.84 L192.51 249.42 L192.97 249.00 L193.43 248.59 L193.89 248.18 L194.35 247.78 L194.81 247.39 L195.27 247.00 L195.72 246.61 L196.18 246.23 L196.64 245.85 L197.10 245.48 L197.56 245.12 L198.02 244.76 L198.48 244.40 L198.93 244.05 L199.39 243.70 L199.85 243.36 L200.31 243.03 L200.77 242.69 L201.23 242.37 L201.68 242.04 L202.14 241.72 L202.60 241.41 L203.06 241.10 L203.52 240.80 L203.98 240.49 L204.44 240.20 L204.89 239.90 L205.35 239.62 L205.81 239.33 L206.27 239.05 L206.73 238.78 L207.19 238.51 L207.65 238.24 L208.10 237.97 L208.56 237.71 L209.02 237.46 L209.48 237.21 L209.94 236.96 L210.40 236.71 L210.85 236.47 L211.31 236.24 L211.77 236.00 L212.23 235.77 L212.69 235.55 L213.15 235.33 L213.61 235.11 L214.06 234.89 L214.52 234.68 L214.98 234.47 L215.44 234.27 L215.90 234.07 L216.36 233.87 L216.81 233.67 L217.27 233.48 L217.73 233.30 L218.19 233.11 L218.65 232.93 L219.11 232.75 L219.57 232.58 L220.02 232.41 L220.48 232.24 L220.94 232.07 L221.40 231.91 L221.86 231.75 L222.32 231.59 L222.78 231.44 L223.23 231.29 L223.69 231.14 L224.15 231.00 L224.61 230.86 L225.07 230.72 L225.53 230.59 L225.98 230.45 L226.44 230.32 L226.90 230.20 L227.36 230.07 L227.82 229.95 L228.28 229.83 L228.74 229.72 L229.19 229.61 L229.65 229.50 L230.11 229.39 L230.57 229.28 L231.03 229.18 L231.49 229.08 L231.95 228.98 L232.40 228.89 L232.86 228.80 L233.32 228.71 L233.78 228.62 L234.24 228.54 L234.70 228.46 L235.15 228.38 L235.61 228.30 L236.07 228.23 L236.53 228.16 L236.99 228.09 L237.45 228.03 L237.91 227.96 L238.36 227.90 L238.82 227.84 L239.28 227.79 L239.74 227.73 L240.20 227.68 L240.66 227.63 L241.11 227.59 L241.57 227.54 L242.03 227.50 L242.49 227.46 L242.95 227.42 L243.41 227.39 L243.87 227.36 L244.32 227.33 L244.78 227.30 L245.24 227.27 L245.70 227.25 L246.16 227.23 L246.62 227.21 L247.08 227.20 L247.53 227.18 L247.99 227.17 L248.45 227.16 L248.91 227.16 L249.37 227.15 L249.83 227.15 L250.28 227.15 L250.74 227.15 L251.20 227.16 L251.66 227.17 L252.12 227.18 L252.58 227.19 L253.04 227.20 L253.49 227.22 L253.95 227.24 L254.41 227.26 L254.87 227.28 L255.33 227.31 L255.79 227.34 L256.25 227.37 L256.70 227.40 L257.16 227.44 L257.62 227.48 L258.08 227.52 L258.54 227.56 L259.00 227.61 L259.45 227.65 L259.91 227.70 L260.37 227.76 L260.83 227.81 L261.29 227.87 L261.75 227.93 L262.21 227.99 L262.66 228.06 L263.12 228.12 L263.58 228.19 L264.04 228.27 L264.50 228.34 L264.96 228.42 L265.41 228.50 L265.87 228.58 L266.33 228.66 L266.79 228.75 L267.25 228.84 L267.71 228.93 L268.17 229.03 L268.62 229.13 L269.08 229.23 L269.54 229.33 L270.00 229.44 L270.46 229.55 L270.92 229.66 L271.38 229.77 L271.83 229.89 L272.29 230.01 L272.75 230.13 L273.21 230.26 L273.67 230.38 L274.13 230.51 L274.58 230.65 L275.04 230.78 L275.50 230.92 L275.96 231.07 L276.42 231.21 L276.88 231.36 L277.34 231.51 L277.79 231.67 L278.25 231.82 L278.71 231.98 L279.17 232.15 L279.63 232.32 L280.09 232.49 L280.55 232.66 L281.00 232.83 L281.46 233.01 L281.92 233.20 L282.38 233.38 L282.84 233.57 L283.30 233.76 L283.75 233.96 L284.21 234.16 L284.67 234.36 L285.13 234.57 L285.59 234.78 L286.05 234.99 L286.51 235.21 L286.96 235.43 L287.42 235.65 L287.88 235.88 L288.34 236.11 L288.80 236.35 L289.26 236.58 L289.71 236.83 L290.17 237.07 L290.63 237.32 L291.09 237.58 L291.55 237.83 L292.01 238.10 L292.47 238.36 L292.92 238.63 L293.38 238.91 L293.84 239.18 L294.30 239.46 L294.76 239.75 L295.22 240.04 L295.68 240.34 L296.13 240.63 L296.59 240.94 L297.05 241.24 L297.51 241.56 L297.97 241.87 L298.43 242.19 L298.88 242.52 L299.34 242.85 L299.80 243.18 L300.26 243.52 L300.72 243.87 L301.18 244.21 L301.64 244.57 L302.09 244.92 L302.55 245.29 L303.01 245.66 L303.47 246.03 L303.93 246.41 L304.39 246.79 L304.84 247.18 L305.30 247.57 L305.76 247.97 L306.22 248.37 L306.68 248.78 L307.14 249.20 L307.60 249.61 L308.05 250.04 L308.51 250.47 L308.97 250.91 L309.43 251.35 L309.89 251.80 L310.35 252.25 L310.81 252.71 L311.26 253.17 L311.72 253.64 L312.18 254.12 L312.64 254.60 L313.10 255.09 L313.56 255.59 L314.01 256.09 L314.47 256.59 L314.93 257.11 L315.39 257.63 L315.85 258.15 L316.31 258.69 L316.77 259.23 L317.22 259.77 L317.68 260.32 L318.14 260.88 L318.60 261.45 L319.06 262.02 L319.52 262.60 L319.98 263.19 L320.43 263.78 L320.89 264.38 L321.35 264.99 L321.81 265.60 L322.27 266.23 L322.73 266.86 L323.18 267.49 L323.64 268.14 L324.10 268.79 L324.56 269.45 L325.02 270.12 L325.48 270.79 L325.94 271.47 L326.39 272.16 L326.85 272.86 L327.31 273.57 L327.77 274.28 L328.23 275.00 L328.69 275.73 L329.14 276.47 L329.60 277.22 L330.06 277.97 L330.52 278.73 L330.98 279.51 L331.44 280.29 L331.90 281.07 L332.35 281.87 L332.81 282.68 L333.27 283.49 L333.73 284.31 L334.19 285.14 L334.65 285.98 L335.11 286.83 L335.56 287.69 L336.02 288.56 L336.48 289.43 L336.94 290.32 L337.40 291.21 L337.86 292.11 L338.31 293.02 L338.77 293.94 L339.23 294.87 L339.69 295.81 L340.15 296.75 L340.61 297.71 L341.07 298.67 L341.52 299.64 L341.98 300.62 L342.44 301.61 L342.90 302.61 L343.36 303.62 L343.82 304.64 L344.28 305.66 L344.73 306.69 L345.19 307.73 L345.65 308.78 L346.11 309.84 L346.57 310.90 L347.03 311.97 L347.48 313.05 L347.94 314.13 L348.40 315.23 L348.86 316.32 L349.32 317.43 L349.78 318.54 L350.24 319.66 L350.69 320.78 L351.15 321.91 L351.61 323.04 L352.07 324.17 L352.53 325.31 L352.99 326.46 L353.44 327.60 L353.90 328.75 L354.36 329.90 L354.82 331.05 L355.28 332.20 L355.74 333.35 L356.20 334.49 L356.65 335.64 L357.11 336.78 L357.57 337.92 L358.03 339.06 L358.49 340.19 L358.95 341.31 L359.41 342.43 L359.86 343.53 L360.32 344.63 L360.78 345.71 L361.24 346.79 L361.70 347.85 L362.16 348.89 L362.61 349.92 L363.07 350.93 L363.53 351.92 L363.99 352.89 L364.45 353.83 L364.91 354.76 L365.37 355.66 L365.82 356.53 L366.28 357.37 L366.74 358.19 L367.20 358.98 L367.66 359.73 L368.12 360.45 L368.58 361.13 L369.03 361.78 L369.49 362.40 L369.95 362.98 L370.41 363.51 L370.87 364.02 L371.33 364.48 L371.78 364.90 L372.24 365.28 L372.70 365.63 L372.70 369.85 L372.85 369.85 L434.29 369.85" fill="none" stroke="#8064b4" stroke-width="1.2" stroke-linejoin="round"/><path d="M67.50 369.85 L185.48 369.85 L185.64 369.85 L185.64 365.34 L185.79 365.26 L186.25 364.99 L186.71 364.69 L187.17 364.35 L187.62 363.98 L188.08 363.58 L188.54 363.15 L189.00 362.69 L189.46 362.20 L189.92 361.68 L190.38 361.13 L190.83 360.56 L191.29 359.97 L191.75 359.35 L192.21 358.71 L192.67 358.06 L193.13 357.39 L193.58 356.70 L194.04 355.99 L194.50 355.28 L194.96 354.55 L195.42 353.81 L195.88 353.07 L196.34 352.31 L196.79 351.55 L197.25 350.78 L197.71 350.01 L198.17 349.23 L198.63 348.46 L199.09 347.68 L199.55 346.90 L200.00 346.12 L200.46 345.34 L200.92 344.56 L201.38 343.78 L201.84 343.01 L202.30 342.24 L202.75 341.47 L203.21 340.71 L203.67 339.95 L204.13 339.20 L204.59 338.45 L205.05 337.71 L205.51 336.98 L205.96 336.25 L206.42 335.53 L206.88 334.81 L207.34 334.11 L207.80 333.41 L208.26 332.71 L208.71 332.03 L209.17 331.35 L209.63 330.68 L210.09 330.02 L210.55 329.37 L211.01 328.72 L211.47 328.09 L211.92 327.46 L212.38 326.84 L212.84 326.23 L213.30 325.63 L213.76 325.04 L214.22 324.45 L214.68 323.88 L215.13 323.31 L215.59 322.75 L216.05 322.20 L216.51 321.66 L216.97 321.13 L217.43 320.61 L217.88 320.09 L218.34 319.59 L218.80 319.09 L219.26 318.60 L219.72 318.12 L220.18 317.65 L220.64 317.19 L221.09 316.73 L221.55 316.29 L222.01 315.85 L222.47 315.42 L222.93 315.00 L223.39 314.59 L223.85 314.18 L224.30 313.79 L224.76 313.40 L225.22 313.02 L225.68 312.65 L226.14 312.28 L226.60 311.93 L227.05 311.58 L227.51 311.24 L227.97 310.91 L228.43 310.59 L228.89 310.27 L229.35 309.96 L229.81 309.66 L230.26 309.37 L230.72 309.08 L231.18 308.80 L231.64 308.53 L232.10 308.27 L232.56 308.02 L233.01 307.77 L233.47 307.53 L233.93 307.29 L234.39 307.07 L234.85 306.85 L235.31 306.64 L235.77 306.43 L236.22 306.24 L236.68 306.05 L237.14 305.87 L237.60 305.69 L238.06 305.52 L238.52 305.36 L238.98 305.21 L239.43 305.06 L239.89 304.92 L240.35 304.79 L240.81 304.66 L241.27 304.54 L241.73 304.43 L242.18 304.32 L242.64 304.22 L243.10 304.13 L243.56 304.05 L244.02 303.97 L244.48 303.90 L244.94 303.83 L245.39 303.77 L245.85 303.72 L246.31 303.68 L246.77 303.64 L247.23 303.61 L247.69 303.59 L248.15 303.57 L248.60 303.56 L249.06 303.55 L249.52 303.56 L249.98 303.57 L250.44 303.58 L250.90 303.61 L251.35 303.64 L251.81 303.67 L252.27 303.72 L252.73 303.77 L253.19 303.82 L253.65 303.89 L254.11 303.96 L254.56 304.04 L255.02 304.12 L255.48 304.21 L255.94 304.31 L256.40 304.41 L256.86 304.52 L257.31 304.64 L257.77 304.77 L258.23 304.90 L258.69 305.04 L259.15 305.19 L259.61 305.34 L260.07 305.50 L260.52 305.67 L260.98 305.84 L261.44 306.02 L261.90 306.21 L262.36 306.41 L262.82 306.61 L263.28 306.82 L263.73 307.04 L264.19 307.26 L264.65 307.50 L265.11 307.73 L265.57 307.98 L266.03 308.24 L266.48 308.50 L266.94 308.77 L267.40 309.04 L267.86 309.33 L268.32 309.62 L268.78 309.92 L269.24 310.23 L269.69 310.54 L270.15 310.87 L270.61 311.20 L271.07 311.53 L271.53 311.88 L271.99 312.24 L272.45 312.60 L272.90 312.97 L273.36 313.35 L273.82 313.73 L274.28 314.13 L274.74 314.53 L275.20 314.94 L275.65 315.36 L276.11 315.79 L276.57 316.23 L277.03 316.67 L277.49 317.13 L277.95 317.59 L278.41 318.06 L278.86 318.54 L279.32 319.02 L279.78 319.52 L280.24 320.03 L280.70 320.54 L281.16 321.06 L281.61 321.59 L282.07 322.13 L282.53 322.68 L282.99 323.24 L283.45 323.80 L283.91 324.38 L284.37 324.96 L284.82 325.55 L285.28 326.15 L285.74 326.76 L286.20 327.38 L286.66 328.00 L287.12 328.64 L287.58 329.28 L288.03 329.93 L288.49 330.59 L288.95 331.26 L289.41 331.94 L289.87 332.62 L290.33 333.31 L290.78 334.01 L291.24 334.72 L291.70 335.43 L292.16 336.15 L292.62 336.88 L293.08 337.62 L293.54 338.36 L293.99 339.10 L294.45 339.85 L294.91 340.61 L295.37 341.37 L295.83 342.14 L296.29 342.91 L296.75 343.68 L297.20 344.46 L297.66 345.23 L298.12 346.01 L298.58 346.79 L299.04 347.57 L299.50 348.35 L299.95 349.13 L300.41 349.91 L300.87 350.68 L301.33 351.45 L301.79 352.21 L302.25 352.97 L302.71 353.71 L303.16 354.45 L303.62 355.18 L304.08 355.90 L304.54 356.61 L305.00 357.30 L305.46 357.97 L305.91 358.63 L306.37 359.27 L306.83 359.89 L307.29 360.48 L307.75 361.06 L308.21 361.61 L308.67 362.13 L309.12 362.62 L309.58 363.09 L310.04 363.53 L310.50 363.93 L310.96 364.30 L311.42 364.64 L311.88 364.95 L312.33 365.22 L312.49 365.31 L312.49 369.85 L312.64 369.85 L434.29 369.85" fill="none" stroke="#3399cc" stroke-width="1.2" stroke-linejoin="round"/><path d="M67.50 369.85 L185.48 369.85 L185.64 369.85 L185.64 369.84 L185.79 369.80 L186.25 369.70 L186.71 369.60 L187.17 369.49 L187.62 369.37 L188.08 369.25 L188.54 369.13 L189.00 369.01 L189.46 368.89 L189.92 368.76 L190.38 368.64 L190.83 368.51 L191.29 368.38 L191.75 368.26 L192.21 368.13 L192.67 368.00 L193.13 367.88 L193.58 367.75 L194.04 367.62 L194.50 367.50 L194.96 367.37 L195.42 367.25 L195.88 367.12 L196.34 367.00 L196.79 366.88 L197.25 366.76 L197.71 366.64 L198.17 366.52 L198.63 366.40 L199.09 366.29 L199.55 366.17 L200.00 366.06 L200.46 365.94 L200.92 365.83 L201.38 365.72 L201.84 365.61 L202.30 365.50 L202.75 365.40 L203.21 365.29 L203.67 365.18 L204.13 365.08 L204.59 364.98 L205.05 364.88 L205.51 364.78 L205.96 364.68 L206.42 364.58 L206.88 364.48 L207.34 364.39 L207.80 364.29 L208.26 364.20 L208.71 364.11 L209.17 364.02 L209.63 363.93 L210.09 363.84 L210.55 363.76 L211.01 363.67 L211.47 363.59 L211.92 363.50 L212.38 363.42 L212.84 363.34 L213.30 363.26 L213.76 363.18 L214.22 363.10 L214.68 363.03 L215.13 362.95 L215.59 362.88 L216.05 362.81 L216.51 362.73 L216.97 362.66 L217.43 362.59 L217.88 362.52 L218.34 362.46 L218.80 362.39 L219.26 362.33 L219.72 362.26 L220.18 362.20 L220.64 362.14 L221.09 362.08 L221.55 362.02 L222.01 361.96 L222.47 361.90 L222.93 361.84 L223.39 361.79 L223.85 361.73 L224.30 361.68 L224.76 361.63 L225.22 361.58 L225.68 361.52 L226.14 361.48 L226.60 361.43 L227.05 361.38 L227.51 361.33 L227.97 361.29 L228.43 361.24 L228.89 361.20 L229.35 361.16 L229.81 361.12 L230.26 361.08 L230.72 361.04 L231.18 361.00 L231.64 360.96 L232.10 360.93 L232.56 360.89 L233.01 360.86 L233.47 360.82 L233.93 360.79 L234.39 360.76 L234.85 360.73 L235.31 360.70 L235.77 360.67 L236.22 360.64 L236.68 360.62 L237.14 360.59 L237.60 360.57 L238.06 360.54 L238.52 360.52 L238.98 360.50 L239.43 360.48 L239.89 360.46 L240.35 360.44 L240.81 360.42 L241.27 360.41 L241.73 360.39 L242.18 360.37 L242.64 360.36 L243.10 360.35 L243.56 360.34 L244.02 360.33 L244.48 360.32 L244.94 360.31 L245.39 360.30 L245.85 360.29 L246.31 360.28 L246.77 360.28 L247.23 360.27 L247.69 360.27 L248.15 360.27 L248.60 360.27 L249.06 360.27 L249.52 360.27 L249.98 360.27 L250.44 360.27 L250.90 360.27 L251.35 360.28 L251.81 360.28 L252.27 360.29 L252.73 360.30 L253.19 360.30 L253.65 360.31 L254.11 360.32 L254.56 360.33 L255.02 360.35 L255.48 360.36 L255.94 360.37 L256.40 360.39 L256.86 360.40 L257.31 360.42 L257.77 360.44 L258.23 360.46 L258.69 360.48 L259.15 360.50 L259.61 360.52 L260.07 360.54 L260.52 360.56 L260.98 360.59 L261.44 360.61 L261.90 360.64 L262.36 360.67 L262.82 360.70 L263.28 360.72 L263.73 360.75 L264.19 360.79 L264.65 360.82 L265.11 360.85 L265.57 360.89 L266.03 360.92 L266.48 360.96 L266.94 360.99 L267.40 361.03 L267.86 361.07 L268.32 361.11 L268.78 361.15 L269.24 361.19 L269.69 361.24 L270.15 361.28 L270.61 361.33 L271.07 361.37 L271.53 361.42 L271.99 361.47 L272.45 361.52 L272.90 361.57 L273.36 361.62 L273.82 361.67 L274.28 361.73 L274.74 361.78 L275.20 361.84 L275.65 361.89 L276.11 361.95 L276.57 362.01 L277.03 362.07 L277.49 362.13 L277.95 362.19 L278.41 362.25 L278.86 362.32 L279.32 362.38 L279.78 362.45 L280.24 362.52 L280.70 362.58 L281.16 362.65 L281.61 362.72 L282.07 362.80 L282.53 362.87 L282.99 362.94 L283.45 363.02 L283.91 363.09 L284.37 363.17 L284.82 363.25 L285.28 363.33 L285.74 363.41 L286.20 363.49 L286.66 363.58 L287.12 363.66 L287.58 363.74 L288.03 363.83 L288.49 363.92 L288.95 364.01 L289.41 364.10 L289.87 364.19 L290.33 364.28 L290.78 364.38 L291.24 364.47 L291.70 364.57 L292.16 364.66 L292.62 364.76 L293.08 364.86 L293.54 364.96 L293.99 365.07 L294.45 365.17 L294.91 365.27 L295.37 365.38 L295.83 365.49 L296.29 365.60 L296.75 365.71 L297.20 365.82 L297.66 365.93 L298.12 366.04 L298.58 366.16 L299.04 366.27 L299.50 366.39 L299.95 366.51 L300.41 366.62 L300.87 366.74 L301.33 366.86 L301.79 366.99 L302.25 367.11 L302.71 367.23 L303.16 367.36 L303.62 367.48 L304.08 367.61 L304.54 367.73 L305.00 367.86 L305.46 367.99 L305.91 368.11 L306.37 368.24 L306.83 368.37 L307.29 368.49 L307.75 368.62 L308.21 368.75 L308.67 368.87 L309.12 369.00 L309.58 369.12 L310.04 369.24 L310.50 369.36 L310.96 369.47 L311.42 369.58 L311.88 369.69 L312.33 369.79 L312.49 369.82 L312.49 369.85 L312.64 369.85 L434.29 369.85" fill="none" stroke="#ffa500" stroke-width="1.2" stroke-linejoin="round"/><path d="M67.50 369.85 L185.48 369.85 L185.64 369.85 L185.64 369.85 L185.79 369.84 L186.25 369.82 L186.71 369.80 L187.17 369.77 L187.62 369.75 L188.08 369.72 L188.54 369.70 L189.00 369.67 L189.46 369.65 L189.92 369.62 L190.38 369.59 L190.83 369.57 L191.29 369.54 L191.75 369.51 L192.21 369.49 L192.67 369.46 L193.13 369.43 L193.58 369.40 L194.04 369.37 L194.50 369.35 L194.96 369.32 L195.42 369.29 L195.88 369.26 L196.34 369.23 L196.79 369.21 L197.25 369.18 L197.71 369.15 L198.17 369.12 L198.63 369.09 L199.09 369.06 L199.55 369.04 L200.00 369.01 L200.46 368.98 L200.92 368.95 L201.38 368.92 L201.84 368.90 L202.30 368.87 L202.75 368.84 L203.21 368.81 L203.67 368.79 L204.13 368.76 L204.59 368.73 L205.05 368.71 L205.51 368.68 L205.96 368.65 L206.42 368.63 L206.88 368.60 L207.34 368.57 L207.80 368.55 L208.26 368.52 L208.71 368.50 L209.17 368.47 L209.63 368.45 L210.09 368.42 L210.55 368.40 L211.01 368.38 L211.47 368.35 L211.92 368.33 L212.38 368.31 L212.84 368.28 L213.30 368.26 L213.76 368.24 L214.22 368.22 L214.68 368.19 L215.13 368.17 L215.59 368.15 L216.05 368.13 L216.51 368.11 L216.97 368.09 L217.43 368.07 L217.88 368.05 L218.34 368.03 L218.80 368.01 L219.26 368.00 L219.72 367.98 L220.18 367.96 L220.64 367.94 L221.09 367.92 L221.55 367.91 L222.01 367.89 L222.47 367.87 L222.93 367.86 L223.39 367.84 L223.85 367.83 L224.30 367.81 L224.76 367.80 L225.22 367.78 L225.68 367.77 L226.14 367.75 L226.60 367.74 L227.05 367.73 L227.51 367.71 L227.97 367.70 L228.43 367.69 L228.89 367.68 L229.35 367.66 L229.81 367.65 L230.26 367.64 L230.72 367.63 L231.18 367.62 L231.64 367.61 L232.10 367.60 L232.56 367.59 L233.01 367.58 L233.47 367.57 L233.93 367.56 L234.39 367.55 L234.85 367.55 L235.31 367.54 L235.77 367.53 L236.22 367.52 L236.68 367.52 L237.14 367.51 L237.60 367.50 L238.06 367.50 L238.52 367.49 L238.98 367.48 L239.43 367.48 L239.89 367.47 L240.35 367.47 L240.81 367.46 L241.27 367.46 L241.73 367.45 L242.18 367.45 L242.64 367.45 L243.10 367.44 L243.56 367.44 L244.02 367.44 L244.48 367.43 L244.94 367.43 L245.39 367.43 L245.85 367.43 L246.31 367.43 L246.77 367.42 L247.23 367.42 L247.69 367.42 L248.15 367.42 L248.60 367.42 L249.06 367.42 L249.52 367.42 L249.98 367.42 L250.44 367.42 L250.90 367.42 L251.35 367.42 L251.81 367.43 L252.27 367.43 L252.73 367.43 L253.19 367.43 L253.65 367.43 L254.11 367.44 L254.56 367.44 L255.02 367.44 L255.48 367.45 L255.94 367.45 L256.40 367.45 L256.86 367.46 L257.31 367.46 L257.77 367.47 L258.23 367.47 L258.69 367.48 L259.15 367.48 L259.61 367.49 L260.07 367.49 L260.52 367.50 L260.98 367.51 L261.44 367.51 L261.90 367.52 L262.36 367.53 L262.82 367.54 L263.28 367.54 L263.73 367.55 L264.19 367.56 L264.65 367.57 L265.11 367.58 L265.57 367.59 L266.03 367.60 L266.48 367.61 L266.94 367.62 L267.40 367.63 L267.86 367.64 L268.32 367.65 L268.78 367.66 L269.24 367.67 L269.69 367.69 L270.15 367.70 L270.61 367.71 L271.07 367.72 L271.53 367.74 L271.99 367.75 L272.45 367.77 L272.90 367.78 L273.36 367.79 L273.82 367.81 L274.28 367.82 L274.74 367.84 L275.20 367.86 L275.65 367.87 L276.11 367.89 L276.57 367.90 L277.03 367.92 L277.49 367.94 L277.95 367.96 L278.41 367.97 L278.86 367.99 L279.32 368.01 L279.78 368.03 L280.24 368.05 L280.70 368.07 L281.16 368.09 L281.61 368.11 L282.07 368.13 L282.53 368.15 L282.99 368.17 L283.45 368.19 L283.91 368.21 L284.37 368.24 L284.82 368.26 L285.28 368.28 L285.74 368.30 L286.20 368.33 L286.66 368.35 L287.12 368.37 L287.58 368.40 L288.03 368.42 L288.49 368.45 L288.95 368.47 L289.41 368.49 L289.87 368.52 L290.33 368.55 L290.78 368.57 L291.24 368.60 L291.70 368.62 L292.16 368.65 L292.62 368.67 L293.08 368.70 L293.54 368.73 L293.99 368.76 L294.45 368.78 L294.91 368.81 L295.37 368.84 L295.83 368.86 L296.29 368.89 L296.75 368.92 L297.20 368.95 L297.66 368.98 L298.12 369.00 L298.58 369.03 L299.04 369.06 L299.50 369.09 L299.95 369.12 L300.41 369.15 L300.87 369.17 L301.33 369.20 L301.79 369.23 L302.25 369.26 L302.71 369.29 L303.16 369.31 L303.62 369.34 L304.08 369.37 L304.54 369.40 L305.00 369.43 L305.46 369.45 L305.91 369.48 L306.37 369.51 L306.83 369.54 L307.29 369.56 L307.75 369.59 L308.21 369.62 L308.67 369.64 L309.12 369.67 L309.58 369.70 L310.04 369.72 L310.50 369.75 L310.96 369.77 L311.42 369.79 L311.88 369.82 L312.33 369.84 L312.49 369.84 L312.49 369.85 L312.64 369.85 L434.29 369.85" fill="none" stroke="#ee82ee" stroke-width="1.2" stroke-linejoin="round"/><path d="M67.50 369.85 L185.48 369.85 L185.64 369.85 L185.64 369.83 L185.79 369.79 L186.25 369.67 L186.71 369.54 L187.17 369.41 L187.62 369.27 L188.08 369.13 L188.54 368.98 L189.00 368.84 L189.46 368.69 L189.92 368.53 L190.38 368.38 L190.83 368.23 L191.29 368.07 L191.75 367.92 L192.21 367.77 L192.67 367.61 L193.13 367.46 L193.58 367.30 L194.04 367.15 L194.50 366.99 L194.96 366.84 L195.42 366.69 L195.88 366.54 L196.34 366.39 L196.79 366.24 L197.25 366.09 L197.71 365.94 L198.17 365.79 L198.63 365.65 L199.09 365.50 L199.55 365.36 L200.00 365.21 L200.46 365.07 L200.92 364.93 L201.38 364.79 L201.84 364.66 L202.30 364.52 L202.75 364.39 L203.21 364.25 L203.67 364.12 L204.13 363.99 L204.59 363.86 L205.05 363.73 L205.51 363.61 L205.96 363.48 L206.42 363.36 L206.88 363.23 L207.34 363.11 L207.80 362.99 L208.26 362.88 L208.71 362.76 L209.17 362.64 L209.63 362.53 L210.09 362.42 L210.55 362.31 L211.01 362.20 L211.47 362.09 L211.92 361.98 L212.38 361.88 L212.84 361.77 L213.30 361.67 L213.76 361.57 L214.22 361.47 L214.68 361.37 L215.13 361.28 L215.59 361.18 L216.05 361.09 L216.51 360.99 L216.97 360.90 L217.43 360.81 L217.88 360.73 L218.34 360.64 L218.80 360.55 L219.26 360.47 L219.72 360.39 L220.18 360.31 L220.64 360.23 L221.09 360.15 L221.55 360.07 L222.01 360.00 L222.47 359.92 L222.93 359.85 L223.39 359.78 L223.85 359.71 L224.30 359.64 L224.76 359.57 L225.22 359.51 L225.68 359.44 L226.14 359.38 L226.60 359.32 L227.05 359.26 L227.51 359.20 L227.97 359.14 L228.43 359.08 L228.89 359.03 L229.35 358.97 L229.81 358.92 L230.26 358.87 L230.72 358.82 L231.18 358.77 L231.64 358.72 L232.10 358.68 L232.56 358.63 L233.01 358.59 L233.47 358.54 L233.93 358.50 L234.39 358.46 L234.85 358.42 L235.31 358.39 L235.77 358.35 L236.22 358.32 L236.68 358.28 L237.14 358.25 L237.60 358.22 L238.06 358.19 L238.52 358.16 L238.98 358.13 L239.43 358.11 L239.89 358.08 L240.35 358.06 L240.81 358.04 L241.27 358.01 L241.73 357.99 L242.18 357.98 L242.64 357.96 L243.10 357.94 L243.56 357.93 L244.02 357.91 L244.48 357.90 L244.94 357.89 L245.39 357.88 L245.85 357.87 L246.31 357.86 L246.77 357.85 L247.23 357.85 L247.69 357.84 L248.15 357.84 L248.60 357.84 L249.06 357.84 L249.52 357.84 L249.98 357.84 L250.44 357.84 L250.90 357.85 L251.35 357.85 L251.81 357.86 L252.27 357.87 L252.73 357.88 L253.19 357.89 L253.65 357.90 L254.11 357.91 L254.56 357.92 L255.02 357.94 L255.48 357.96 L255.94 357.97 L256.40 357.99 L256.86 358.01 L257.31 358.03 L257.77 358.05 L258.23 358.08 L258.69 358.10 L259.15 358.13 L259.61 358.16 L260.07 358.19 L260.52 358.21 L260.98 358.25 L261.44 358.28 L261.90 358.31 L262.36 358.35 L262.82 358.38 L263.28 358.42 L263.73 358.46 L264.19 358.50 L264.65 358.54 L265.11 358.58 L265.57 358.62 L266.03 358.67 L266.48 358.72 L266.94 358.76 L267.40 358.81 L267.86 358.86 L268.32 358.91 L268.78 358.97 L269.24 359.02 L269.69 359.07 L270.15 359.13 L270.61 359.19 L271.07 359.25 L271.53 359.31 L271.99 359.37 L272.45 359.43 L272.90 359.50 L273.36 359.56 L273.82 359.63 L274.28 359.70 L274.74 359.77 L275.20 359.84 L275.65 359.91 L276.11 359.99 L276.57 360.06 L277.03 360.14 L277.49 360.22 L277.95 360.30 L278.41 360.38 L278.86 360.46 L279.32 360.54 L279.78 360.63 L280.24 360.72 L280.70 360.80 L281.16 360.89 L281.61 360.98 L282.07 361.07 L282.53 361.17 L282.99 361.26 L283.45 361.36 L283.91 361.46 L284.37 361.56 L284.82 361.66 L285.28 361.76 L285.74 361.86 L286.20 361.97 L286.66 362.07 L287.12 362.18 L287.58 362.29 L288.03 362.40 L288.49 362.51 L288.95 362.63 L289.41 362.74 L289.87 362.86 L290.33 362.98 L290.78 363.10 L291.24 363.22 L291.70 363.34 L292.16 363.46 L292.62 363.59 L293.08 363.71 L293.54 363.84 L293.99 363.97 L294.45 364.10 L294.91 364.23 L295.37 364.37 L295.83 364.50 L296.29 364.64 L296.75 364.78 L297.20 364.91 L297.66 365.05 L298.12 365.20 L298.58 365.34 L299.04 365.48 L299.50 365.63 L299.95 365.77 L300.41 365.92 L300.87 366.07 L301.33 366.22 L301.79 366.37 L302.25 366.52 L302.71 366.67 L303.16 366.82 L303.62 366.97 L304.08 367.13 L304.54 367.28 L305.00 367.44 L305.46 367.59 L305.91 367.74 L306.37 367.90 L306.83 368.05 L307.29 368.21 L307.75 368.36 L308.21 368.51 L308.67 368.67 L309.12 368.82 L309.58 368.96 L310.04 369.11 L310.50 369.25 L310.96 369.39 L311.42 369.53 L311.88 369.65 L312.33 369.78 L312.49 369.82 L312.49 369.85 L312.64 369.85 L434.29 369.85" fill="none" stroke="#d8b0b0" stroke-width="1.2" stroke-linejoin="round"/><path d="M67.50 369.85 L185.48 369.85 L185.64 369.85 L185.64 365.32 L185.79 365.20 L186.25 364.81 L186.71 364.38 L187.17 363.91 L187.62 363.40 L188.08 362.86 L188.54 362.28 L189.00 361.67 L189.46 361.03 L189.92 360.36 L190.38 359.66 L190.83 358.94 L191.29 358.19 L191.75 357.42 L192.21 356.63 L192.67 355.82 L193.13 354.99 L193.58 354.15 L194.04 353.29 L194.50 352.42 L194.96 351.54 L195.42 350.65 L195.88 349.75 L196.34 348.85 L196.79 347.93 L197.25 347.02 L197.71 346.10 L198.17 345.18 L198.63 344.25 L199.09 343.33 L199.55 342.40 L200.00 341.48 L200.46 340.56 L200.92 339.64 L201.38 338.73 L201.84 337.82 L202.30 336.91 L202.75 336.01 L203.21 335.11 L203.67 334.22 L204.13 333.34 L204.59 332.46 L205.05 331.60 L205.51 330.73 L205.96 329.88 L206.42 329.03 L206.88 328.20 L207.34 327.37 L207.80 326.55 L208.26 325.74 L208.71 324.94 L209.17 324.14 L209.63 323.36 L210.09 322.59 L210.55 321.83 L211.01 321.07 L211.47 320.33 L211.92 319.59 L212.38 318.87 L212.84 318.16 L213.30 317.45 L213.76 316.76 L214.22 316.07 L214.68 315.40 L215.13 314.74 L215.59 314.08 L216.05 313.44 L216.51 312.81 L216.97 312.18 L217.43 311.57 L217.88 310.97 L218.34 310.38 L218.80 309.79 L219.26 309.22 L219.72 308.66 L220.18 308.11 L220.64 307.56 L221.09 307.03 L221.55 306.51 L222.01 306.00 L222.47 305.49 L222.93 305.00 L223.39 304.52 L223.85 304.04 L224.30 303.58 L224.76 303.12 L225.22 302.68 L225.68 302.24 L226.14 301.81 L226.60 301.40 L227.05 300.99 L227.51 300.59 L227.97 300.20 L228.43 299.82 L228.89 299.45 L229.35 299.08 L229.81 298.73 L230.26 298.39 L230.72 298.05 L231.18 297.72 L231.64 297.41 L232.10 297.10 L232.56 296.80 L233.01 296.50 L233.47 296.22 L233.93 295.95 L234.39 295.68 L234.85 295.42 L235.31 295.18 L235.77 294.94 L236.22 294.70 L236.68 294.48 L237.14 294.27 L237.60 294.06 L238.06 293.86 L238.52 293.67 L238.98 293.49 L239.43 293.32 L239.89 293.15 L240.35 292.99 L240.81 292.84 L241.27 292.70 L241.73 292.57 L242.18 292.45 L242.64 292.33 L243.10 292.22 L243.56 292.12 L244.02 292.03 L244.48 291.95 L244.94 291.87 L245.39 291.80 L245.85 291.74 L246.31 291.69 L246.77 291.64 L247.23 291.61 L247.69 291.58 L248.15 291.56 L248.60 291.55 L249.06 291.54 L249.52 291.55 L249.98 291.56 L250.44 291.58 L250.90 291.60 L251.35 291.64 L251.81 291.68 L252.27 291.73 L252.73 291.79 L253.19 291.86 L253.65 291.93 L254.11 292.02 L254.56 292.11 L255.02 292.21 L255.48 292.32 L255.94 292.43 L256.40 292.55 L256.86 292.69 L257.31 292.83 L257.77 292.97 L258.23 293.13 L258.69 293.29 L259.15 293.47 L259.61 293.65 L260.07 293.83 L260.52 294.03 L260.98 294.24 L261.44 294.45 L261.90 294.67 L262.36 294.90 L262.82 295.14 L263.28 295.39 L263.73 295.65 L264.19 295.91 L264.65 296.18 L265.11 296.47 L265.57 296.76 L266.03 297.06 L266.48 297.36 L266.94 297.68 L267.40 298.01 L267.86 298.34 L268.32 298.68 L268.78 299.04 L269.24 299.40 L269.69 299.77 L270.15 300.15 L270.61 300.54 L271.07 300.93 L271.53 301.34 L271.99 301.76 L272.45 302.18 L272.90 302.62 L273.36 303.06 L273.82 303.52 L274.28 303.98 L274.74 304.45 L275.20 304.93 L275.65 305.43 L276.11 305.93 L276.57 306.44 L277.03 306.96 L277.49 307.49 L277.95 308.03 L278.41 308.59 L278.86 309.15 L279.32 309.72 L279.78 310.30 L280.24 310.89 L280.70 311.49 L281.16 312.10 L281.61 312.72 L282.07 313.36 L282.53 314.00 L282.99 314.65 L283.45 315.31 L283.91 315.98 L284.37 316.67 L284.82 317.36 L285.28 318.06 L285.74 318.77 L286.20 319.50 L286.66 320.23 L287.12 320.97 L287.58 321.72 L288.03 322.49 L288.49 323.26 L288.95 324.04 L289.41 324.83 L289.87 325.63 L290.33 326.44 L290.78 327.26 L291.24 328.09 L291.70 328.92 L292.16 329.77 L292.62 330.62 L293.08 331.48 L293.54 332.35 L293.99 333.22 L294.45 334.11 L294.91 334.99 L295.37 335.89 L295.83 336.79 L296.29 337.70 L296.75 338.61 L297.20 339.52 L297.66 340.44 L298.12 341.36 L298.58 342.28 L299.04 343.20 L299.50 344.13 L299.95 345.05 L300.41 345.98 L300.87 346.90 L301.33 347.81 L301.79 348.72 L302.25 349.63 L302.71 350.53 L303.16 351.42 L303.62 352.31 L304.08 353.18 L304.54 354.04 L305.00 354.88 L305.46 355.71 L305.91 356.52 L306.37 357.32 L306.83 358.09 L307.29 358.84 L307.75 359.57 L308.21 360.27 L308.67 360.94 L309.12 361.59 L309.58 362.20 L310.04 362.79 L310.50 363.33 L310.96 363.84 L311.42 364.32 L311.88 364.75 L312.33 365.15 L312.49 365.27 L312.49 369.85 L312.64 369.85 L434.29 369.85" fill="none" stroke="#00ff00" stroke-width="1.2" stroke-linejoin="round"/><line x1="67.5" y1="370.65" x2="434.3" y2="370.65" stroke="#404040" stroke-width="0.9"/><rect x="471.3" y="211.3" width="90.3" height="182" fill="#fff" stroke="#9aa4b0" stroke-width="0.9"/><line x1="475.8" y1="219.00" x2="485" y2="219.00" stroke="#000080" stroke-width="1.15" opacity="0.85"/><line x1="475.8" y1="230.78" x2="485" y2="230.78" stroke="#ffc000" stroke-width="1.15" opacity="0.85"/><line x1="475.8" y1="242.56" x2="485" y2="242.56" stroke="#6b8e23" stroke-width="1.15" opacity="0.85"/><line x1="475.8" y1="254.34" x2="485" y2="254.34" stroke="#8a2be2" stroke-width="1.15" opacity="0.85"/><line x1="475.8" y1="266.12" x2="485" y2="266.12" stroke="#00ffff" stroke-width="1.15" opacity="0.85"/><line x1="475.8" y1="277.90" x2="485" y2="277.90" stroke="#c8702a" stroke-width="1.15" opacity="0.85"/><line x1="475.8" y1="289.68" x2="485" y2="289.68" stroke="#4169e1" stroke-width="1.15" opacity="0.85"/><line x1="475.8" y1="301.46" x2="485" y2="301.46" stroke="#ff2020" stroke-width="1.15" opacity="0.85"/><line x1="475.8" y1="313.24" x2="485" y2="313.24" stroke="#9acd32" stroke-width="1.15" opacity="0.85"/><line x1="475.8" y1="325.02" x2="485" y2="325.02" stroke="#8064b4" stroke-width="1.15" opacity="0.85"/><line x1="475.8" y1="336.80" x2="485" y2="336.80" stroke="#3399cc" stroke-width="1.15" opacity="0.85"/><line x1="475.8" y1="348.58" x2="485" y2="348.58" stroke="#ffa500" stroke-width="1.15" opacity="0.85"/><line x1="475.8" y1="360.36" x2="485" y2="360.36" stroke="#ee82ee" stroke-width="1.15" opacity="0.85"/><line x1="475.8" y1="372.14" x2="485" y2="372.14" stroke="#d8b0b0" stroke-width="1.15" opacity="0.85"/><line x1="475.8" y1="383.92" x2="485" y2="383.92" stroke="#00ff00" stroke-width="1.15" opacity="0.85"/></svg><div style="position:absolute;-webkit-text-stroke:0.1px currentColor;top:367.59px;font-size:5.50px;line-height:5.50px;color:#000;white-space:nowrap;right:538.70px;">0</div><div style="position:absolute;-webkit-text-stroke:0.1px currentColor;top:338.49px;font-size:5.50px;line-height:5.50px;color:#000;white-space:nowrap;right:538.70px;">200</div><div style="position:absolute;-webkit-text-stroke:0.1px currentColor;top:309.38px;font-size:5.50px;line-height:5.50px;color:#000;white-space:nowrap;right:538.70px;">400</div><div style="position:absolute;-webkit-text-stroke:0.1px currentColor;top:280.27px;font-size:5.50px;line-height:5.50px;color:#000;white-space:nowrap;right:538.70px;">600</div><div style="position:absolute;-webkit-text-stroke:0.1px currentColor;top:251.16px;font-size:5.50px;line-height:5.50px;color:#000;white-space:nowrap;right:538.70px;">800</div><div style="position:absolute;-webkit-text-stroke:0.1px currentColor;top:222.05px;font-size:5.50px;line-height:5.50px;color:#000;white-space:nowrap;right:538.70px;">1000</div><div style="position:absolute;-webkit-text-stroke:0.1px currentColor;top:192.95px;font-size:5.50px;line-height:5.50px;color:#000;white-space:nowrap;right:538.70px;">1200</div><div style="position:absolute;left:68.70px;top:372.8px;font-size:5.4px;line-height:5.4px;color:#000;-webkit-text-stroke:0.1px #000;transform:rotate(58deg);transform-origin:0 0;white-space:nowrap">0</div><div style="position:absolute;left:99.27px;top:372.8px;font-size:5.4px;line-height:5.4px;color:#000;-webkit-text-stroke:0.1px #000;transform:rotate(58deg);transform-origin:0 0;white-space:nowrap">2</div><div style="position:absolute;left:129.83px;top:372.8px;font-size:5.4px;line-height:5.4px;color:#000;-webkit-text-stroke:0.1px #000;transform:rotate(58deg);transform-origin:0 0;white-space:nowrap">4</div><div style="position:absolute;left:160.40px;top:372.8px;font-size:5.4px;line-height:5.4px;color:#000;-webkit-text-stroke:0.1px #000;transform:rotate(58deg);transform-origin:0 0;white-space:nowrap">6</div><div style="position:absolute;left:190.96px;top:372.8px;font-size:5.4px;line-height:5.4px;color:#000;-webkit-text-stroke:0.1px #000;transform:rotate(58deg);transform-origin:0 0;white-space:nowrap">8</div><div style="position:absolute;left:221.53px;top:372.8px;font-size:5.4px;line-height:5.4px;color:#000;-webkit-text-stroke:0.1px #000;transform:rotate(58deg);transform-origin:0 0;white-space:nowrap">10</div><div style="position:absolute;left:252.10px;top:372.8px;font-size:5.4px;line-height:5.4px;color:#000;-webkit-text-stroke:0.1px #000;transform:rotate(58deg);transform-origin:0 0;white-space:nowrap">12</div><div style="position:absolute;left:282.66px;top:372.8px;font-size:5.4px;line-height:5.4px;color:#000;-webkit-text-stroke:0.1px #000;transform:rotate(58deg);transform-origin:0 0;white-space:nowrap">14</div><div style="position:absolute;left:313.23px;top:372.8px;font-size:5.4px;line-height:5.4px;color:#000;-webkit-text-stroke:0.1px #000;transform:rotate(58deg);transform-origin:0 0;white-space:nowrap">16</div><div style="position:absolute;left:343.79px;top:372.8px;font-size:5.4px;line-height:5.4px;color:#000;-webkit-text-stroke:0.1px #000;transform:rotate(58deg);transform-origin:0 0;white-space:nowrap">18</div><div style="position:absolute;left:374.36px;top:372.8px;font-size:5.4px;line-height:5.4px;color:#000;-webkit-text-stroke:0.1px #000;transform:rotate(58deg);transform-origin:0 0;white-space:nowrap">20</div><div style="position:absolute;left:404.93px;top:372.8px;font-size:5.4px;line-height:5.4px;color:#000;-webkit-text-stroke:0.1px #000;transform:rotate(58deg);transform-origin:0 0;white-space:nowrap">22</div><div style="position:absolute;left:435.49px;top:372.8px;font-size:5.4px;line-height:5.4px;color:#000;-webkit-text-stroke:0.1px #000;transform:rotate(58deg);transform-origin:0 0;white-space:nowrap">24</div><div style="position:absolute;-webkit-text-stroke:0.1px currentColor;top:386.22px;font-size:6.24px;line-height:6.24px;color:#111;white-space:nowrap;left:251.30px;width:0;display:flex;justify-content:center;">Time [h]</div><div style="position:absolute;left:34.2px;top:282.6px;width:0;height:0"><div style="position:absolute;transform:translate(-50%,-50%) rotate(-90deg);font-size:6.3px;line-height:6.3px;white-space:nowrap;color:#000;-webkit-text-stroke:0.15px #000">Radiation [W/m²]</div></div><div style="position:absolute;-webkit-text-stroke:0.1px currentColor;top:214.66px;font-size:4.65px;line-height:4.65px;color:#444;white-space:nowrap;left:487.60px;">Direct Radiation</div><div style="position:absolute;-webkit-text-stroke:0.1px currentColor;top:220.36px;font-size:4.65px;line-height:4.65px;color:#444;white-space:nowrap;left:487.60px;">March 21 (Spring Equinox)</div><div style="position:absolute;-webkit-text-stroke:0.1px currentColor;top:226.44px;font-size:4.65px;line-height:4.65px;color:#444;white-space:nowrap;left:487.60px;">Sky Radiation</div><div style="position:absolute;-webkit-text-stroke:0.1px currentColor;top:232.14px;font-size:4.65px;line-height:4.65px;color:#444;white-space:nowrap;left:487.60px;">March 21 (Spring Equinox)</div><div style="position:absolute;-webkit-text-stroke:0.1px currentColor;top:238.22px;font-size:4.65px;line-height:4.65px;color:#444;white-space:nowrap;left:487.60px;">Reflex Radiation</div><div style="position:absolute;-webkit-text-stroke:0.1px currentColor;top:243.92px;font-size:4.65px;line-height:4.65px;color:#444;white-space:nowrap;left:487.60px;">March 21 (Spring Equinox)</div><div style="position:absolute;-webkit-text-stroke:0.1px currentColor;top:250.00px;font-size:4.65px;line-height:4.65px;color:#444;white-space:nowrap;left:487.60px;">Diffuse Radiation</div><div style="position:absolute;-webkit-text-stroke:0.1px currentColor;top:255.70px;font-size:4.65px;line-height:4.65px;color:#444;white-space:nowrap;left:487.60px;">March 21 (Spring Equinox)</div><div style="position:absolute;-webkit-text-stroke:0.1px currentColor;top:261.78px;font-size:4.65px;line-height:4.65px;color:#444;white-space:nowrap;left:487.60px;">Global Radiation</div><div style="position:absolute;-webkit-text-stroke:0.1px currentColor;top:267.48px;font-size:4.65px;line-height:4.65px;color:#444;white-space:nowrap;left:487.60px;">March 21 (Spring Equinox)</div><div style="position:absolute;-webkit-text-stroke:0.1px currentColor;top:273.56px;font-size:4.65px;line-height:4.65px;color:#444;white-space:nowrap;left:487.60px;">Direct Radiation</div><div style="position:absolute;-webkit-text-stroke:0.1px currentColor;top:279.26px;font-size:4.65px;line-height:4.65px;color:#444;white-space:nowrap;left:487.60px;">June 21 (Summer Solstice)</div><div style="position:absolute;-webkit-text-stroke:0.1px currentColor;top:285.34px;font-size:4.65px;line-height:4.65px;color:#444;white-space:nowrap;left:487.60px;">Sky Radiation</div><div style="position:absolute;-webkit-text-stroke:0.1px currentColor;top:291.04px;font-size:4.65px;line-height:4.65px;color:#444;white-space:nowrap;left:487.60px;">June 21 (Summer Solstice)</div><div style="position:absolute;-webkit-text-stroke:0.1px currentColor;top:297.12px;font-size:4.65px;line-height:4.65px;color:#444;white-space:nowrap;left:487.60px;">Reflex Radiation</div><div style="position:absolute;-webkit-text-stroke:0.1px currentColor;top:302.82px;font-size:4.65px;line-height:4.65px;color:#444;white-space:nowrap;left:487.60px;">June 21 (Summer Solstice)</div><div style="position:absolute;-webkit-text-stroke:0.1px currentColor;top:308.90px;font-size:4.65px;line-height:4.65px;color:#444;white-space:nowrap;left:487.60px;">Diffuse Radiation</div><div style="position:absolute;-webkit-text-stroke:0.1px currentColor;top:314.60px;font-size:4.65px;line-height:4.65px;color:#444;white-space:nowrap;left:487.60px;">June 21 (Summer Solstice)</div><div style="position:absolute;-webkit-text-stroke:0.1px currentColor;top:320.68px;font-size:4.65px;line-height:4.65px;color:#444;white-space:nowrap;left:487.60px;">Global Radiation</div><div style="position:absolute;-webkit-text-stroke:0.1px currentColor;top:326.38px;font-size:4.65px;line-height:4.65px;color:#444;white-space:nowrap;left:487.60px;">June 21 (Summer Solstice)</div><div style="position:absolute;-webkit-text-stroke:0.1px currentColor;top:332.46px;font-size:4.65px;line-height:4.65px;color:#444;white-space:nowrap;left:487.60px;">Direct Radiation</div><div style="position:absolute;-webkit-text-stroke:0.1px currentColor;top:338.16px;font-size:4.65px;line-height:4.65px;color:#444;white-space:nowrap;left:487.60px;">December 21 (Winter Solstice)</div><div style="position:absolute;-webkit-text-stroke:0.1px currentColor;top:344.24px;font-size:4.65px;line-height:4.65px;color:#444;white-space:nowrap;left:487.60px;">Sky Radiation</div><div style="position:absolute;-webkit-text-stroke:0.1px currentColor;top:349.94px;font-size:4.65px;line-height:4.65px;color:#444;white-space:nowrap;left:487.60px;">December 21 (Winter Solstice)</div><div style="position:absolute;-webkit-text-stroke:0.1px currentColor;top:356.02px;font-size:4.65px;line-height:4.65px;color:#444;white-space:nowrap;left:487.60px;">Reflex Radiation</div><div style="position:absolute;-webkit-text-stroke:0.1px currentColor;top:361.72px;font-size:4.65px;line-height:4.65px;color:#444;white-space:nowrap;left:487.60px;">December 21 (Winter Solstice)</div><div style="position:absolute;-webkit-text-stroke:0.1px currentColor;top:367.80px;font-size:4.65px;line-height:4.65px;color:#444;white-space:nowrap;left:487.60px;">Diffuse Radiation</div><div style="position:absolute;-webkit-text-stroke:0.1px currentColor;top:373.50px;font-size:4.65px;line-height:4.65px;color:#444;white-space:nowrap;left:487.60px;">December 21 (Winter Solstice)</div><div style="position:absolute;-webkit-text-stroke:0.1px currentColor;top:379.58px;font-size:4.65px;line-height:4.65px;color:#444;white-space:nowrap;left:487.60px;">Global Radiation</div><div style="position:absolute;-webkit-text-stroke:0.1px currentColor;top:385.28px;font-size:4.65px;line-height:4.65px;color:#444;white-space:nowrap;left:487.60px;">December 21 (Winter Solstice)</div>

<!-- footer -->
<div class="a" style="left:33px;top:406.5px;width:527px;height:1.1px;background:#8a8a8a"></div>
<div class="t" style="left:35px;top:413.1px;font-size:6.88px;line-height:6.88px;color:#000">SolRad - Copyright (c) 2018 Komicki Dienstleistungen in EDV &amp; IT http://www.komicki.eu</div>
<div class="t" style="right:42.5px;top:413.1px;font-size:6.77px;line-height:6.77px;color:#000">Seite 1 von 1</div>

<!-- TITLEBAR -->
<div class="a" style="left:5.5px;top:4.6px;width:8.2px;height:7.6px;border-radius:50%;background:radial-gradient(circle at 40% 35%,#fde85a,#f0c814 65%,#dca810)"></div>
<div class="t" style="left:16.3px;top:4.6px;font-size:7px;line-height:7px;color:#0c1638;-webkit-text-stroke:0.15px #0c1638;transform:scaleX(0.8);transform-origin:0 0">SolRad</div>

<div class="a" style="left:0;top:0;width:600px;height:481px;pointer-events:none">
<svg width="600" height="481" style="position:absolute;left:0;top:0">
 <!-- printer -->
 <rect x="5.6" y="18.2" width="5.2" height="3.8" rx="0.8" fill="#eef4fc" stroke="#6f9ad6" stroke-width="0.9"/>
 <rect x="4.1" y="21.2" width="8.2" height="4.3" rx="1" fill="#c8c3b8" stroke="#7a7468" stroke-width="0.7"/>
 <rect x="5.2" y="23.6" width="6" height="1" fill="#f2f0ea"/>
 <!-- open folder -->
 <rect x="40.2" y="20.2" width="7.6" height="5.6" fill="#f0a830" stroke="#c87818" stroke-width="0.6"/>
 <rect x="41" y="21" width="5" height="2.2" fill="#ffe080"/>
 <path d="M46.5 18.8 L48.3 18.6 L47.8 20.2" fill="none" stroke="#6a6a6a" stroke-width="0.6"/>
 <!-- save -->
 <rect x="52.6" y="18.3" width="8" height="7.8" rx="0.6" fill="#6c9ad8" stroke="#3f6eb4" stroke-width="0.6"/>
 <rect x="54" y="19" width="5.2" height="2.6" fill="#f4f7fc"/>
 <rect x="54" y="23.4" width="5.2" height="1.9" fill="#8cd070"/>
 <!-- dropdown -->
 <path d="M93.2 21.7 L95.9 21.7 L94.55 23.1 Z" fill="#2a3a5a"/>
 <!-- envelope -->
 <rect x="100.2" y="20" width="7.8" height="5.2" fill="#e8f0fa" stroke="#8aa6c8" stroke-width="0.8"/>
 <path d="M100.4 20.3 L104.1 23.1 L107.8 20.3" fill="none" stroke="#8aa6c8" stroke-width="0.7"/>
 <!-- binoculars -->
 <rect x="112.6" y="21.4" width="3.5" height="4" rx="1.2" fill="#3d5e8c"/>
 <rect x="117.3" y="21.4" width="3.5" height="4" rx="1.2" fill="#3d5e8c"/>
 <rect x="113.3" y="19" width="2.2" height="3" fill="#5a7aa8"/>
 <rect x="117.9" y="19" width="2.2" height="3" fill="#5a7aa8"/>
 <rect x="115.8" y="21.6" width="1.8" height="1.6" fill="#2a3a5a"/>
 <!-- layout -->
 <rect x="126.2" y="19.2" width="7.2" height="6.8" fill="#fafcff" stroke="#4a78b8" stroke-width="0.7"/>
 <rect x="126.2" y="19.2" width="7.2" height="1.6" fill="#4a78b8"/>
 <line x1="129.8" y1="20.8" x2="129.8" y2="26" stroke="#4a78b8" stroke-width="0.6"/>
 <!-- page with arrow -->
 <rect x="139.6" y="19" width="5.8" height="7.2" fill="#f4f6fa" stroke="#8a96a8" stroke-width="0.6"/>
 <path d="M138.8 25.8 L142.6 22" stroke="#3a6ad0" stroke-width="1.1"/>
 <rect x="141.2" y="20" width="3" height="2.6" fill="#9aa8b8"/>
 <!-- edit -->
 <rect x="150.8" y="20" width="6.4" height="6.2" fill="#f6f6f2" stroke="#8a96a8" stroke-width="0.6"/>
 <path d="M152.6 24.6 L157.6 19.4" stroke="#f0a020" stroke-width="1.6"/>
 <!-- page green -->
 <rect x="163.4" y="19" width="6.2" height="7.2" fill="#e6e8ea" stroke="#8a96a8" stroke-width="0.6"/>
 <rect x="165.6" y="21.2" width="1.8" height="3.4" fill="#3aa040"/>
 <!-- separators -->
 <line x1="174.4" y1="19" x2="174.4" y2="26.5" stroke="#a8c0e0" stroke-width="0.8"/>
 <line x1="266" y1="19" x2="266" y2="26.5" stroke="#a8c0e0" stroke-width="0.8"/>
 <!-- nav -->
 <rect x="177.7" y="20" width="1.4" height="5.6" fill="#3f72c8"/>
 <path d="M183.4 20 L183.4 25.6 L179.4 22.8 Z" fill="#3f72c8"/>
 <path d="M194.8 20 L194.8 25.6 L190.8 22.8 Z" fill="#4f86d8"/>
 <path d="M245 20 L245 25.6 L249 22.8 Z" fill="#4f86d8"/>
 <path d="M255.8 20 L255.8 25.6 L259.8 22.8 Z" fill="#3f72c8"/>
 <rect x="259.8" y="20" width="1.4" height="5.6" fill="#3f72c8"/>
 <!-- input -->
 <rect x="200.7" y="17.6" width="20" height="9.2" fill="#fff" stroke="#b4c8e4" stroke-width="0.7"/>
</svg>
</div>
<div class="t" style="left:14.4px;top:19.7px;font-size:6.7px;line-height:6.7px;color:#1f4a96;-webkit-text-stroke:0.12px #1f4a96;transform:scaleX(0.815);transform-origin:0 0">Drucken</div>
<div class="t" style="left:63px;top:19.7px;font-size:6.7px;line-height:6.7px;color:#1f4a96;-webkit-text-stroke:0.12px #1f4a96;transform:scaleX(0.795);transform-origin:0 0">Speichern</div>
<div class="t" style="left:216.2px;top:19.7px;font-size:6.7px;line-height:6.7px;color:#1a2a4a;-webkit-text-stroke:0.12px #1a2a4a;transform:scaleX(0.83);transform-origin:0 0">1</div>
<div class="t" style="left:222.7px;top:19.7px;font-size:6.7px;line-height:6.7px;color:#1a2a4a;-webkit-text-stroke:0.12px #1a2a4a;transform:scaleX(0.83);transform-origin:0 0">von 1</div>
<div class="t" style="left:269px;top:19.7px;font-size:6.7px;line-height:6.7px;color:#1f4a96;-webkit-text-stroke:0.12px #1f4a96;transform:scaleX(0.77);transform-origin:0 0">Schliessen</div>
<!-- window buttons -->
<svg width="600" height="20" style="position:absolute;left:0;top:0">
 <line x1="537.6" y1="8.5" x2="542.8" y2="8.5" stroke="#333" stroke-width="0.9"/>
 <rect x="560.4" y="6" width="4.8" height="4.6" fill="none" stroke="#333" stroke-width="0.9"/>
 <path d="M584.3 5.8 L589.3 10.8 M589.3 5.8 L584.3 10.8" stroke="#333" stroke-width="0.9"/>
</svg>


<div class="t" style="left:2.9px;top:470.3px;font-size:6.2px;line-height:6.2px;color:#34477a;transform:scaleX(0.93);transform-origin:0 0">Seite 1 von 1</div>
<div class="a" style="left:472px;top:466px;width:1px;height:12.5px;background:#a8c0e0"></div>
<div class="a" style="left:473px;top:466px;width:125px;height:12.5px;background:linear-gradient(#dae8f8,#d2e2f7 40%,#b6cfef 52%,#bcd3f1 62%,#b4ccee 88%,#e4eefc 97%)"></div>
<svg width="600" height="481" style="position:absolute;left:0;top:0">
 <rect x="475.5" y="467" width="33" height="10" fill="#c8dcf4" stroke="#9ab4d8" stroke-width="0.5"/>
 <rect x="476.5" y="468" width="8.5" height="8.4" fill="#d4dce6" stroke="#7a8aa0" stroke-width="0.5"/>
 <path d="M478 472.2 L479.6 471 L479.6 473.4 Z M483.5 472.2 L481.9 471 L481.9 473.4 Z" fill="#2a5ab0"/>
 <rect x="488" y="468.3" width="7" height="7.8" fill="#eef0f2" stroke="#6a7a90" stroke-width="0.6"/>
 <rect x="499" y="468.3" width="7" height="7.8" fill="#c8c8c8" stroke="#8a96a8" stroke-width="0.6"/>
 <circle cx="534" cy="472.2" r="3.4" fill="#eef3fa" stroke="#5a6a88" stroke-width="0.6"/>
 <line x1="532.2" y1="472.2" x2="535.8" y2="472.2" stroke="#333" stroke-width="0.8"/>
 <line x1="537.6" y1="472.2" x2="582" y2="472.2" stroke="#7f93b8" stroke-width="0.7"/>
 <rect x="557" y="469.2" width="3.2" height="5.8" rx="1" fill="#eef3fa" stroke="#6a7a98" stroke-width="0.6"/>
 <circle cx="585.7" cy="472.2" r="3.4" fill="#eef3fa" stroke="#5a6a88" stroke-width="0.6"/>
 <path d="M583.9 472.2 L587.5 472.2 M585.7 470.4 L585.7 474" stroke="#333" stroke-width="0.8"/>
</svg>
<div class="t" style="left:512.4px;top:470.3px;font-size:6.2px;line-height:6.2px;color:#1a3a8a;transform:scaleX(0.9);transform-origin:0 0">100%</div>

</body></html>
